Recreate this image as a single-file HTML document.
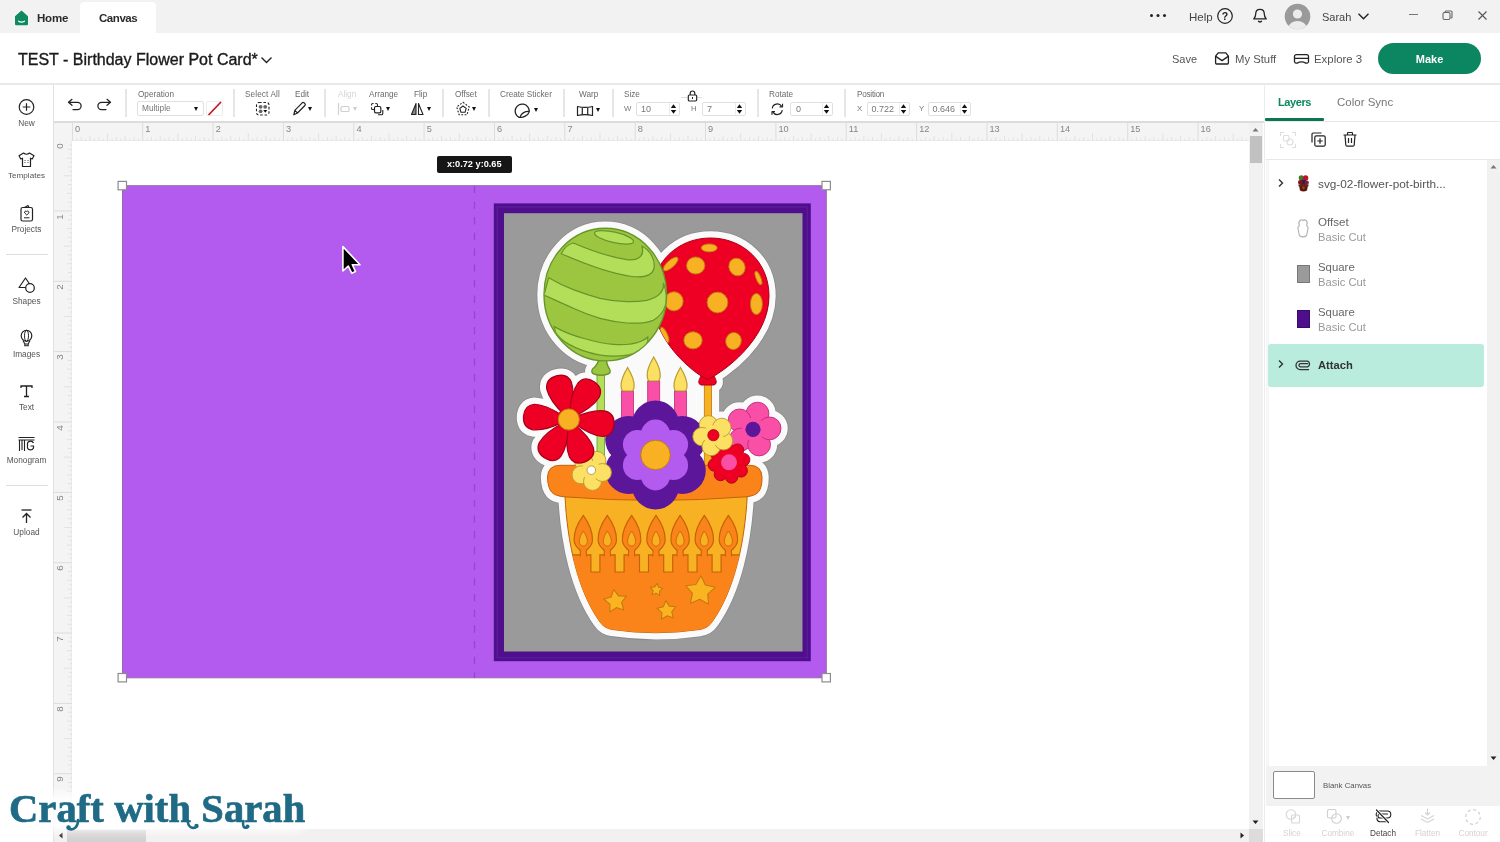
<!DOCTYPE html>
<html>
<head>
<meta charset="utf-8">
<title>Design Space</title>
<style>
*{box-sizing:border-box;margin:0;padding:0}
html,body{width:1500px;height:842px;overflow:hidden;background:#fff}
body{font-family:"Liberation Sans",sans-serif;color:#333;position:relative}
.abs{position:absolute}
.t{position:absolute;white-space:nowrap;line-height:1}
/* top tab bar */
#tabbar{left:0;top:0;width:1500px;height:33px;background:#f2f2f2}
#canvastab{left:80px;top:2px;width:76px;height:31px;background:#fff;border-radius:4px 4px 0 0}
/* header */
#header{left:0;top:33px;width:1500px;height:52px;background:#fff;border-bottom:2px solid #e9e9e9}
/* toolbar */
#toolbar{left:54px;top:84.6px;width:1210px;height:38.4px;background:#fff;border-bottom:2px solid #dcdcdc}
.sep{position:absolute;top:89px;width:2px;height:28px;background:#e6e6e6}
.lbl{position:absolute;white-space:nowrap;line-height:1;font-size:8.5px;color:#6a6a6a;top:91px}
.inp{position:absolute;top:102px;height:14px;border:1px solid #e0e0e0;border-radius:2px;background:#fff;font-size:9px;color:#777;line-height:12px;padding-left:5px}
.spin{position:absolute;top:103px;width:6px;height:12px}
.dd{position:absolute;width:0;height:0;border-left:2.5px solid transparent;border-right:2.5px solid transparent;border-top:4px solid #111}
/* left sidebar */
#sidebar{left:0;top:84.6px;width:54px;height:757.4px;background:#fff;border-right:1px solid #e0e0e0}
.sl{position:absolute;left:0;width:53px;text-align:center;font-size:8.5px;color:#555;line-height:1}
.sline{position:absolute;left:6px;width:42px;height:1px;background:#ddd}
/* rulers */
#rulerh{left:54px;top:123px;width:1195px;height:18px;background:#f4f4f4;border-bottom:1px solid #ebebeb}
#rulerv{left:54px;top:141px;width:18px;height:688px;background:#f4f4f4;border-right:1px solid #ebebeb}
.rn{position:absolute;font-size:9.2px;color:#858585;line-height:1}
/* right panel */
#rpanel{left:1263.5px;top:84.6px;width:236.5px;height:757.4px;background:#fff;border-left:1.2px solid #ececec}
</style>
</head>
<body>
<div id="root" style="position:absolute;left:0;top:0;width:1500px;height:842px;will-change:transform;overflow:hidden">
<div class="abs" id="tabbar"></div>
<div class="abs" id="canvastab"></div>
<div class="abs" id="header"></div>
<div class="abs" id="toolbar"></div>
<div class="abs" id="sidebar"></div>
<div class="abs" id="rulerh"></div>
<div class="abs" id="rulerv"></div>
<div class="abs" id="rpanel"></div>

<svg class="abs" style="left:13px;top:9px" width="17" height="18" viewBox="0 0 17 18"><path d="M8.5 1.5 L15 7.2 V15 a1.3 1.3 0 0 1 -1.3 1.3 H3.3 A1.3 1.3 0 0 1 2 15 V7.2 Z" fill="#0d8a5f"/><path d="M5.6 12.2 q2.9 1.7 5.8 0" stroke="#fff" stroke-width="1.3" fill="none" stroke-linecap="round"/></svg>
<div class="t" style="left:37px;top:13px;font-size:11.5px;font-weight:bold;color:#2b2b2b;letter-spacing:-0.2px">Home</div>
<div class="t" style="left:99px;top:13px;font-size:11.5px;font-weight:bold;color:#2b2b2b;letter-spacing:-0.45px">Canvas</div>
<div class="abs" style="left:1150px;top:14px;width:3px;height:3px;border-radius:50%;background:#222;box-shadow:6.5px 0 0 #222,13px 0 0 #222"></div>
<div class="t" style="left:1189px;top:12px;font-size:11.5px;color:#444">Help</div>
<svg class="abs" style="left:1216px;top:7px" width="18" height="18" viewBox="0 0 18 18"><circle cx="9" cy="9" r="7.3" fill="none" stroke="#222" stroke-width="1.2"/><text x="9" y="13" text-anchor="middle" font-family="Liberation Sans" font-size="10.5" font-weight="bold" fill="#222">?</text></svg>
<svg class="abs" style="left:1251px;top:7px" width="18" height="18" viewBox="0 0 18 18"><path d="M9 2.3 c-2.8 0 -4.3 2 -4.3 4.6 c0 2.6 -0.9 3.8 -1.9 5 h12.4 c-1 -1.2 -1.9 -2.4 -1.9 -5 c0 -2.6 -1.5 -4.6 -4.3 -4.6 z" fill="none" stroke="#222" stroke-width="1.3" stroke-linejoin="round"/><path d="M7.3 13.8 a1.8 1.8 0 0 0 3.4 0" fill="none" stroke="#222" stroke-width="1.3"/></svg>
<svg class="abs" style="left:1284px;top:3px" width="27" height="27" viewBox="0 0 27 27"><defs><clipPath id="av"><circle cx="13.5" cy="13.5" r="12.8"/></clipPath></defs><circle cx="13.5" cy="13.5" r="12.8" fill="#9a9a9a"/><g clip-path="url(#av)"><circle cx="13.5" cy="11" r="4.6" fill="#ececec"/><ellipse cx="13.5" cy="24.5" rx="9" ry="6.5" fill="#ececec"/></g></svg>
<div class="t" style="left:1322px;top:12px;font-size:11px;color:#444">Sarah</div>
<svg class="abs" style="left:1357px;top:12px" width="13" height="9" viewBox="0 0 13 9"><path d="M1.5 1.8 L6.5 6.8 L11.5 1.8" fill="none" stroke="#222" stroke-width="1.4"/></svg>
<div class="abs" style="left:1409px;top:14px;width:9px;height:1px;background:#777"></div>
<svg class="abs" style="left:1442px;top:10px" width="11" height="11" viewBox="0 0 11 11"><rect x="1" y="2.5" width="7" height="7" rx="1.5" fill="none" stroke="#666" stroke-width="1.1"/><path d="M3 2.5 V2 a1 1 0 0 1 1 -1 H9 a1 1 0 0 1 1 1 V7 a1 1 0 0 1 -1 1 H8.5" fill="none" stroke="#666" stroke-width="1.1"/></svg>
<svg class="abs" style="left:1477px;top:10px" width="11" height="11" viewBox="0 0 11 11"><path d="M1.5 1.5 L9.5 9.5 M9.5 1.5 L1.5 9.5" stroke="#555" stroke-width="1.1"/></svg>


<div class="t" style="left:18px;top:51.5px;font-size:16px;color:#1a1a1a;-webkit-text-stroke:0.35px #1a1a1a">TEST - Birthday Flower Pot Card*</div>
<svg class="abs" style="left:260px;top:56px" width="13" height="9" viewBox="0 0 13 9"><path d="M1.5 1.5 L6.5 6.5 L11.5 1.5" fill="none" stroke="#222" stroke-width="1.4"/></svg>
<div class="t" style="left:1172px;top:54px;font-size:11px;color:#555">Save</div>
<svg class="abs" style="left:1214px;top:50.5px" width="16" height="15" viewBox="0 0 16 15"><path d="M1.6 5.2 L4.2 1.8 H11.8 L14.4 5.2 V12 a1 1 0 0 1 -1 1 H2.6 a1 1 0 0 1 -1 -1 Z" fill="none" stroke="#222" stroke-width="1.3" stroke-linejoin="round"/><path d="M1.8 5.4 L8 9.6 L14.2 5.4" fill="none" stroke="#222" stroke-width="1.3" stroke-linejoin="round"/></svg>
<div class="t" style="left:1235px;top:54px;font-size:11.3px;color:#555">My Stuff</div>
<svg class="abs" style="left:1293px;top:52.5px" width="17" height="12" viewBox="0 0 17 12"><path d="M3.4 1.6 H13.6 a1.9 1.9 0 0 1 1.9 1.9 V8.6 a1.5 1.5 0 0 1 -1.5 1.5 H12.8 Q8.5 7.8 4.2 10.1 H3 a1.5 1.5 0 0 1 -1.5 -1.5 V3.5 a1.9 1.9 0 0 1 1.9 -1.9 Z M1.6 5.3 H15.4" fill="none" stroke="#222" stroke-width="1.3" stroke-linejoin="round"/></svg>
<div class="t" style="left:1314px;top:54px;font-size:11.4px;color:#555">Explore 3</div>
<div class="abs" style="left:1378px;top:43px;width:103px;height:31px;border-radius:16px;background:#0b8660"></div>
<div class="t" style="left:1378px;width:103px;text-align:center;top:54px;font-size:11px;font-weight:bold;color:#fff">Make</div>

<div class="sep" style="left:125px"></div>
<div class="sep" style="left:233px"></div>
<div class="sep" style="left:324px"></div>
<div class="sep" style="left:442px"></div>
<div class="sep" style="left:488px"></div>
<div class="sep" style="left:563px"></div>
<div class="sep" style="left:612px"></div>
<div class="sep" style="left:757px"></div>
<div class="sep" style="left:844px"></div>
<svg class="abs" style="left:66px;top:97px" width="18" height="16" viewBox="0 0 18 16"><path d="M6 2.3 L2.5 5.3 L6 8.3 M2.8 5.3 H11.5 a3.6 3.6 0 0 1 0 7.2 H7" fill="none" stroke="#222" stroke-width="1.25" stroke-linecap="round" stroke-linejoin="round"/></svg>
<svg class="abs" style="left:95px;top:97px" width="18" height="16" viewBox="0 0 18 16"><path d="M12 2.3 L15.5 5.3 L12 8.3 M15.2 5.3 H6.5 a3.6 3.6 0 0 0 0 7.2 H11" fill="none" stroke="#222" stroke-width="1.25" stroke-linecap="round" stroke-linejoin="round"/></svg>
<div class="lbl" style="left:138px;font-size:8.2px">Operation</div>
<div class="inp" style="left:137px;width:67px;top:101px;height:15px;line-height:13px;font-size:8.3px;padding-left:4px">Multiple</div>
<div class="dd" style="left:194px;top:107px;border-top-color:#111"></div><div class="abs" style="left:206px;top:101px;width:17px;height:15px;border:1px solid #ececec;border-radius:2px"></div>
<svg class="abs" style="left:207px;top:101px" width="16" height="15" viewBox="0 0 16 15"><path d="M2 13.5 L13.5 1.5" stroke="#c4161c" stroke-width="1.7" stroke-linecap="round"/></svg>
<div class="lbl" style="left:245px;font-size:8.2px;letter-spacing:0.12px">Select All</div>
<svg class="abs" style="left:255px;top:101px" width="16" height="16" viewBox="0 0 16 16"><rect x="1.5" y="1.5" width="12.5" height="12.5" rx="2.5" fill="none" stroke="#222" stroke-width="1.1" stroke-dasharray="2.6 1.8"/><circle cx="5.6" cy="5.8" r="1.9" fill="#666"/><circle cx="10.2" cy="5.8" r="1.9" fill="#666"/><circle cx="5.6" cy="10.3" r="1.9" fill="#666"/><path d="M8.3 9 H12.3 L10.3 11.8 Z" fill="#111"/></svg>
<div class="lbl" style="left:295px;font-size:8.2px">Edit</div>
<svg class="abs" style="left:292px;top:101px" width="15" height="16" viewBox="0 0 15 16"><path d="M10.2 1.8 a1.3 1.3 0 0 1 1.8 0 l0.9 0.9 a1.3 1.3 0 0 1 0 1.8 L5.5 12 L1.8 13.8 L2.8 9.3 Z M2.8 9.3 L5.5 12" fill="none" stroke="#222" stroke-width="1.2" stroke-linejoin="round"/></svg>
<div class="dd" style="left:308px;top:107px;border-top-color:#111"></div><div class="lbl" style="left:338px;font-size:8.2px;color:#d4d4d4">Align</div>
<svg class="abs" style="left:337px;top:102px" width="14" height="14" viewBox="0 0 14 14"><path d="M1.5 1 V13" stroke="#d0d0d0" stroke-width="1.2"/><rect x="4" y="4.5" width="8" height="5" rx="1" fill="none" stroke="#d0d0d0" stroke-width="1.2"/></svg>
<div class="dd" style="left:353px;top:107px;border-top-color:#ccc"></div><div class="lbl" style="left:369px;font-size:8.2px">Arrange</div>
<svg class="abs" style="left:370px;top:102px" width="15" height="15" viewBox="0 0 15 15"><path d="M4.2 7.5 H2.8 a1.3 1.3 0 0 1 -1.3 -1.3 V5.3 M1.5 3.6 V2.8 a1.3 1.3 0 0 1 1.3 -1.3 H3.6 M5.3 1.5 H6.2 a1.3 1.3 0 0 1 1.3 1.3 V4" fill="none" stroke="#222" stroke-width="1.1"/><rect x="4.5" y="4.5" width="6.3" height="6.3" rx="1.3" fill="#fff" stroke="#222" stroke-width="1.2"/><path d="M12.8 8 V11.5 a1.3 1.3 0 0 1 -1.3 1.3 H8" fill="none" stroke="#222" stroke-width="1.1"/></svg>
<div class="dd" style="left:386px;top:107px;border-top-color:#111"></div><div class="lbl" style="left:414px;font-size:8.2px">Flip</div>
<svg class="abs" style="left:410px;top:102px" width="15" height="15" viewBox="0 0 15 15"><path d="M6 1.5 V12.5 H1.5 Z" fill="#888" stroke="#222" stroke-width="1.1" stroke-linejoin="round"/><path d="M8.5 1.5 V12.5 H13 Z" fill="#fff" stroke="#222" stroke-width="1.1" stroke-linejoin="round"/></svg>
<div class="dd" style="left:427px;top:107px;border-top-color:#111"></div><div class="lbl" style="left:455px;font-size:8.2px">Offset</div>
<svg class="abs" style="left:455px;top:101px" width="16" height="17" viewBox="0 0 16 17"><path d="M8 1.3 L14.3 6 L11.9 13.8 H4.1 L1.7 6 Z" fill="none" stroke="#222" stroke-width="1.1" stroke-dasharray="1.8 1.5" stroke-linejoin="round"/><path d="M8 5 L11.2 7.4 L10 11.3 H6 L4.8 7.4 Z" fill="none" stroke="#222" stroke-width="1.1" stroke-linejoin="round"/></svg>
<div class="dd" style="left:472px;top:107px;border-top-color:#111"></div><div class="lbl" style="left:500px;font-size:8.2px">Create Sticker</div>
<svg class="abs" style="left:514px;top:102px" width="18" height="18" viewBox="0 0 18 18"><path d="M5 15.3 A7 7 0 1 1 15.2 9.5 C11.5 9.2 7 11 6 15.3 Z" fill="none" stroke="#222" stroke-width="1.3" stroke-linejoin="round"/><path d="M6 15.3 C8.5 15.8 14.5 13.5 15.2 9.5" fill="none" stroke="#222" stroke-width="1.3"/></svg>
<div class="dd" style="left:534px;top:108px;border-top-color:#111"></div><div class="lbl" style="left:579px;font-size:8.2px">Warp</div>
<svg class="abs" style="left:576px;top:105px" width="18" height="12" viewBox="0 0 18 12"><path d="M1.5 1.5 Q9 3.3 16.5 1.5 V10.5 Q9 8.7 1.5 10.5 Z M6.3 2.3 V9.7 M11.7 2.3 V9.7" fill="none" stroke="#222" stroke-width="1.2" stroke-linejoin="round"/></svg>
<div class="dd" style="left:596px;top:108px;border-top-color:#111"></div><div class="lbl" style="left:624px;font-size:8.2px">Size</div>
<div class="lbl" style="left:624px;top:105px;font-size:7.8px;color:#777">W</div>
<div class="inp" style="left:636px;width:44px;padding-left:4px">10</div>
<div class="abs" style="left:669px;top:103px;width:1px;height:12px;background:#ececec"></div>
<svg class="abs" style="left:670px;top:103px" width="7" height="12" viewBox="0 0 7 12"><path d="M0.8 5 L3.5 1.3 L6.2 5 Z M0.8 7 L3.5 10.7 L6.2 7 Z" fill="#111"/></svg><div class="abs" style="left:681px;top:97px;width:6px;height:1px;background:#ddd"></div><div class="abs" style="left:698px;top:97px;width:4px;height:1px;background:#ddd"></div>
<svg class="abs" style="left:687px;top:90px" width="11" height="12" viewBox="0 0 11 12"><path d="M3.2 5 V3.3 a2.3 2.3 0 0 1 4.6 0 V5" fill="none" stroke="#222" stroke-width="1.2"/><rect x="1.3" y="5" width="8.4" height="6" rx="1.2" fill="#fff" stroke="#222" stroke-width="1.2"/><rect x="5" y="7" width="1" height="2" fill="#222"/></svg>
<div class="lbl" style="left:691px;top:105px;font-size:7.8px;color:#777">H</div>
<div class="inp" style="left:702px;width:44px;padding-left:4px">7</div>
<div class="abs" style="left:735px;top:103px;width:1px;height:12px;background:#ececec"></div>
<svg class="abs" style="left:736px;top:103px" width="7" height="12" viewBox="0 0 7 12"><path d="M0.8 5 L3.5 1.3 L6.2 5 Z M0.8 7 L3.5 10.7 L6.2 7 Z" fill="#111"/></svg><div class="lbl" style="left:769px;font-size:8.2px">Rotate</div>
<svg class="abs" style="left:770px;top:102px" width="14.5" height="14.5" viewBox="0 0 16 16"><path d="M2.5 7 A5.6 5.6 0 0 1 12.8 4.8 M13.5 9 A5.6 5.6 0 0 1 3.2 11.2" fill="none" stroke="#222" stroke-width="1.3"/><path d="M13.8 2 V5.3 H10.5 M2.2 14 V10.7 H5.5" fill="none" stroke="#222" stroke-width="1.3" stroke-linejoin="round"/></svg>
<div class="inp" style="left:790px;width:43px">0</div>
<div class="abs" style="left:822px;top:103px;width:1px;height:12px;background:#ececec"></div>
<svg class="abs" style="left:823px;top:103px" width="7" height="12" viewBox="0 0 7 12"><path d="M0.8 5 L3.5 1.3 L6.2 5 Z M0.8 7 L3.5 10.7 L6.2 7 Z" fill="#111"/></svg><div class="lbl" style="left:857px;font-size:8.2px;letter-spacing:-0.25px">Position</div>
<div class="lbl" style="left:857px;top:105px;font-size:7.8px;color:#777">X</div>
<div class="inp" style="left:867px;width:43px;padding-left:3.5px;font-size:9px">0.722</div>
<div class="abs" style="left:899px;top:103px;width:1px;height:12px;background:#ececec"></div>
<svg class="abs" style="left:900px;top:103px" width="7" height="12" viewBox="0 0 7 12"><path d="M0.8 5 L3.5 1.3 L6.2 5 Z M0.8 7 L3.5 10.7 L6.2 7 Z" fill="#111"/></svg><div class="lbl" style="left:919px;top:105px;font-size:7.8px;color:#777">Y</div>
<div class="inp" style="left:928px;width:43px;padding-left:3.5px;font-size:9px">0.646</div>
<div class="abs" style="left:960px;top:103px;width:1px;height:12px;background:#ececec"></div>
<svg class="abs" style="left:961px;top:103px" width="7" height="12" viewBox="0 0 7 12"><path d="M0.8 5 L3.5 1.3 L6.2 5 Z M0.8 7 L3.5 10.7 L6.2 7 Z" fill="#111"/></svg>

<svg class="abs" style="left:17px;top:97px" width="19" height="19" viewBox="0 0 19 19"><circle cx="9.5" cy="10" r="7.3" fill="none" stroke="#222" stroke-width="1.2"/><path d="M9.5 6.2 V13.8 M5.7 10 H13.3" stroke="#222" stroke-width="1.2"/></svg>
<div class="sl" style="top:119px;font-size:8.3px">New</div>
<svg class="abs" style="left:17px;top:151px" width="19" height="18" viewBox="0 0 19 18"><path d="M6.5 2 L2 4.8 L3.8 8 L5.5 7.2 V15.5 H13.5 V7.2 L15.2 8 L17 4.8 L12.5 2 Q9.5 4.5 6.5 2 Z" fill="none" stroke="#222" stroke-width="1.2" stroke-linejoin="round"/><path d="M8 9 v4 M11 9 v4" stroke="#222" stroke-width="0.8" stroke-dasharray="1 1"/></svg>
<div class="sl" style="top:172px;font-size:8.1px">Templates</div>
<svg class="abs" style="left:19px;top:204px" width="16" height="19" viewBox="0 0 16 19"><rect x="2" y="3.5" width="11.5" height="13.5" rx="1.8" fill="none" stroke="#222" stroke-width="1.2"/><path d="M5.5 3.5 L9 1.5 L10 3.5" fill="none" stroke="#222" stroke-width="1.1"/><path d="M7.750000 11 L5.6 8.9 a1.3 1.3 0 0 1 2.150000 -1.4 a1.3 1.3 0 0 1 2.150000 1.4 Z" fill="none" stroke="#222" stroke-width="1"/><path d="M5 13.8 H10.5" stroke="#222" stroke-width="1"/></svg>
<div class="sl" style="top:225px;font-size:8.3px">Projects</div>
<div class="sline" style="top:254px"></div>
<svg class="abs" style="left:17px;top:276px" width="20" height="19" viewBox="0 0 20 19"><path d="M8.5 2 L15 11.5 H2 Z" fill="none" stroke="#222" stroke-width="1.2" stroke-linejoin="round"/><circle cx="13" cy="12" r="4.3" fill="#fff" stroke="#222" stroke-width="1.2"/></svg>
<div class="sl" style="top:297px;font-size:8.3px">Shapes</div>
<svg class="abs" style="left:19px;top:329px" width="15" height="19" viewBox="0 0 15 19"><ellipse cx="7.5" cy="6.8" rx="5.3" ry="5.5" fill="none" stroke="#222" stroke-width="1.2"/><ellipse cx="7.5" cy="6.8" rx="2" ry="5.5" fill="none" stroke="#222" stroke-width="1"/><path d="M4 11.5 L5.8 15 H9.2 L11 11.5 M5.8 15 V16.8 H9.2 V15" fill="none" stroke="#222" stroke-width="1.1"/></svg>
<div class="sl" style="top:350px;font-size:8.3px">Images</div>
<svg class="abs" style="left:19px;top:384px" width="15" height="15" viewBox="0 0 15 15"><path d="M2 4 V2 H13 V4 M7.5 2 V12.5 M5 12.5 H10" fill="none" stroke="#222" stroke-width="1.3"/></svg>
<div class="sl" style="top:403px;font-size:8.3px">Text</div>
<svg class="abs" style="left:17px;top:436px" width="19" height="17" viewBox="0 0 19 17"><path d="M1.5 1.5 H17.5 M1.5 4 H17.5" stroke="#222" stroke-width="1.1"/><path d="M2.5 15 V4 M5 14 V4 M7.5 15 V4" stroke="#222" stroke-width="1.1"/><path d="M16.5 7 a3.3 3.3 0 0 0 -6 0 V12 a3.3 3.3 0 0 0 6 0 V10 H13.5" fill="none" stroke="#222" stroke-width="1.2"/></svg>
<div class="sl" style="top:456px;font-size:8.3px">Monogram</div>
<div class="sline" style="top:485px"></div>
<svg class="abs" style="left:18px;top:508px" width="17" height="17" viewBox="0 0 17 17"><path d="M3.5 2 H13.5" stroke="#222" stroke-width="1.3"/><path d="M8.5 15 V5.5 M4.5 9.5 L8.5 5.5 L12.5 9.5" fill="none" stroke="#222" stroke-width="1.3"/></svg>
<div class="sl" style="top:528px;font-size:8.3px">Upload</div>

<svg class="abs" style="left:54px;top:123px" width="1195" height="19" viewBox="0 0 1195 19"><rect x="17.9" y="0" width="1" height="18" fill="#dcdcdc"/><rect x="22.3" y="15.5" width="1" height="2.5" fill="#e2e2e2"/><rect x="26.7" y="14" width="1" height="4" fill="#e2e2e2"/><rect x="31.1" y="15.5" width="1" height="2.5" fill="#e2e2e2"/><rect x="35.5" y="13" width="1" height="5" fill="#e2e2e2"/><rect x="39.9" y="15.5" width="1" height="2.5" fill="#e2e2e2"/><rect x="44.3" y="14" width="1" height="4" fill="#e2e2e2"/><rect x="48.7" y="15.5" width="1" height="2.5" fill="#e2e2e2"/><rect x="53.1" y="10" width="1" height="8" fill="#e2e2e2"/><rect x="57.5" y="15.5" width="1" height="2.5" fill="#e2e2e2"/><rect x="61.9" y="14" width="1" height="4" fill="#e2e2e2"/><rect x="66.3" y="15.5" width="1" height="2.5" fill="#e2e2e2"/><rect x="70.7" y="13" width="1" height="5" fill="#e2e2e2"/><rect x="75.1" y="15.5" width="1" height="2.5" fill="#e2e2e2"/><rect x="79.5" y="14" width="1" height="4" fill="#e2e2e2"/><rect x="83.9" y="15.5" width="1" height="2.5" fill="#e2e2e2"/><rect x="88.2" y="0" width="1" height="18" fill="#dcdcdc"/><rect x="92.6" y="15.5" width="1" height="2.5" fill="#e2e2e2"/><rect x="97.0" y="14" width="1" height="4" fill="#e2e2e2"/><rect x="101.4" y="15.5" width="1" height="2.5" fill="#e2e2e2"/><rect x="105.8" y="13" width="1" height="5" fill="#e2e2e2"/><rect x="110.2" y="15.5" width="1" height="2.5" fill="#e2e2e2"/><rect x="114.6" y="14" width="1" height="4" fill="#e2e2e2"/><rect x="119.0" y="15.5" width="1" height="2.5" fill="#e2e2e2"/><rect x="123.4" y="10" width="1" height="8" fill="#e2e2e2"/><rect x="127.8" y="15.5" width="1" height="2.5" fill="#e2e2e2"/><rect x="132.2" y="14" width="1" height="4" fill="#e2e2e2"/><rect x="136.6" y="15.5" width="1" height="2.5" fill="#e2e2e2"/><rect x="141.0" y="13" width="1" height="5" fill="#e2e2e2"/><rect x="145.4" y="15.5" width="1" height="2.5" fill="#e2e2e2"/><rect x="149.8" y="14" width="1" height="4" fill="#e2e2e2"/><rect x="154.2" y="15.5" width="1" height="2.5" fill="#e2e2e2"/><rect x="158.6" y="0" width="1" height="18" fill="#dcdcdc"/><rect x="163.0" y="15.5" width="1" height="2.5" fill="#e2e2e2"/><rect x="167.4" y="14" width="1" height="4" fill="#e2e2e2"/><rect x="171.8" y="15.5" width="1" height="2.5" fill="#e2e2e2"/><rect x="176.2" y="13" width="1" height="5" fill="#e2e2e2"/><rect x="180.6" y="15.5" width="1" height="2.5" fill="#e2e2e2"/><rect x="185.0" y="14" width="1" height="4" fill="#e2e2e2"/><rect x="189.4" y="15.5" width="1" height="2.5" fill="#e2e2e2"/><rect x="193.8" y="10" width="1" height="8" fill="#e2e2e2"/><rect x="198.2" y="15.5" width="1" height="2.5" fill="#e2e2e2"/><rect x="202.6" y="14" width="1" height="4" fill="#e2e2e2"/><rect x="207.0" y="15.5" width="1" height="2.5" fill="#e2e2e2"/><rect x="211.4" y="13" width="1" height="5" fill="#e2e2e2"/><rect x="215.8" y="15.5" width="1" height="2.5" fill="#e2e2e2"/><rect x="220.2" y="14" width="1" height="4" fill="#e2e2e2"/><rect x="224.6" y="15.5" width="1" height="2.5" fill="#e2e2e2"/><rect x="228.9" y="0" width="1" height="18" fill="#dcdcdc"/><rect x="233.3" y="15.5" width="1" height="2.5" fill="#e2e2e2"/><rect x="237.7" y="14" width="1" height="4" fill="#e2e2e2"/><rect x="242.1" y="15.5" width="1" height="2.5" fill="#e2e2e2"/><rect x="246.5" y="13" width="1" height="5" fill="#e2e2e2"/><rect x="250.9" y="15.5" width="1" height="2.5" fill="#e2e2e2"/><rect x="255.3" y="14" width="1" height="4" fill="#e2e2e2"/><rect x="259.7" y="15.5" width="1" height="2.5" fill="#e2e2e2"/><rect x="264.1" y="10" width="1" height="8" fill="#e2e2e2"/><rect x="268.5" y="15.5" width="1" height="2.5" fill="#e2e2e2"/><rect x="272.9" y="14" width="1" height="4" fill="#e2e2e2"/><rect x="277.3" y="15.5" width="1" height="2.5" fill="#e2e2e2"/><rect x="281.7" y="13" width="1" height="5" fill="#e2e2e2"/><rect x="286.1" y="15.5" width="1" height="2.5" fill="#e2e2e2"/><rect x="290.5" y="14" width="1" height="4" fill="#e2e2e2"/><rect x="294.9" y="15.5" width="1" height="2.5" fill="#e2e2e2"/><rect x="299.3" y="0" width="1" height="18" fill="#dcdcdc"/><rect x="303.7" y="15.5" width="1" height="2.5" fill="#e2e2e2"/><rect x="308.1" y="14" width="1" height="4" fill="#e2e2e2"/><rect x="312.5" y="15.5" width="1" height="2.5" fill="#e2e2e2"/><rect x="316.9" y="13" width="1" height="5" fill="#e2e2e2"/><rect x="321.3" y="15.5" width="1" height="2.5" fill="#e2e2e2"/><rect x="325.7" y="14" width="1" height="4" fill="#e2e2e2"/><rect x="330.1" y="15.5" width="1" height="2.5" fill="#e2e2e2"/><rect x="334.5" y="10" width="1" height="8" fill="#e2e2e2"/><rect x="338.9" y="15.5" width="1" height="2.5" fill="#e2e2e2"/><rect x="343.3" y="14" width="1" height="4" fill="#e2e2e2"/><rect x="347.7" y="15.5" width="1" height="2.5" fill="#e2e2e2"/><rect x="352.1" y="13" width="1" height="5" fill="#e2e2e2"/><rect x="356.5" y="15.5" width="1" height="2.5" fill="#e2e2e2"/><rect x="360.9" y="14" width="1" height="4" fill="#e2e2e2"/><rect x="365.3" y="15.5" width="1" height="2.5" fill="#e2e2e2"/><rect x="369.6" y="0" width="1" height="18" fill="#dcdcdc"/><rect x="374.0" y="15.5" width="1" height="2.5" fill="#e2e2e2"/><rect x="378.4" y="14" width="1" height="4" fill="#e2e2e2"/><rect x="382.8" y="15.5" width="1" height="2.5" fill="#e2e2e2"/><rect x="387.2" y="13" width="1" height="5" fill="#e2e2e2"/><rect x="391.6" y="15.5" width="1" height="2.5" fill="#e2e2e2"/><rect x="396.0" y="14" width="1" height="4" fill="#e2e2e2"/><rect x="400.4" y="15.5" width="1" height="2.5" fill="#e2e2e2"/><rect x="404.8" y="10" width="1" height="8" fill="#e2e2e2"/><rect x="409.2" y="15.5" width="1" height="2.5" fill="#e2e2e2"/><rect x="413.6" y="14" width="1" height="4" fill="#e2e2e2"/><rect x="418.0" y="15.5" width="1" height="2.5" fill="#e2e2e2"/><rect x="422.4" y="13" width="1" height="5" fill="#e2e2e2"/><rect x="426.8" y="15.5" width="1" height="2.5" fill="#e2e2e2"/><rect x="431.2" y="14" width="1" height="4" fill="#e2e2e2"/><rect x="435.6" y="15.5" width="1" height="2.5" fill="#e2e2e2"/><rect x="440.0" y="0" width="1" height="18" fill="#dcdcdc"/><rect x="444.4" y="15.5" width="1" height="2.5" fill="#e2e2e2"/><rect x="448.8" y="14" width="1" height="4" fill="#e2e2e2"/><rect x="453.2" y="15.5" width="1" height="2.5" fill="#e2e2e2"/><rect x="457.6" y="13" width="1" height="5" fill="#e2e2e2"/><rect x="462.0" y="15.5" width="1" height="2.5" fill="#e2e2e2"/><rect x="466.4" y="14" width="1" height="4" fill="#e2e2e2"/><rect x="470.8" y="15.5" width="1" height="2.5" fill="#e2e2e2"/><rect x="475.2" y="10" width="1" height="8" fill="#e2e2e2"/><rect x="479.6" y="15.5" width="1" height="2.5" fill="#e2e2e2"/><rect x="484.0" y="14" width="1" height="4" fill="#e2e2e2"/><rect x="488.4" y="15.5" width="1" height="2.5" fill="#e2e2e2"/><rect x="492.8" y="13" width="1" height="5" fill="#e2e2e2"/><rect x="497.2" y="15.5" width="1" height="2.5" fill="#e2e2e2"/><rect x="501.6" y="14" width="1" height="4" fill="#e2e2e2"/><rect x="506.0" y="15.5" width="1" height="2.5" fill="#e2e2e2"/><rect x="510.3" y="0" width="1" height="18" fill="#dcdcdc"/><rect x="514.7" y="15.5" width="1" height="2.5" fill="#e2e2e2"/><rect x="519.1" y="14" width="1" height="4" fill="#e2e2e2"/><rect x="523.5" y="15.5" width="1" height="2.5" fill="#e2e2e2"/><rect x="527.9" y="13" width="1" height="5" fill="#e2e2e2"/><rect x="532.3" y="15.5" width="1" height="2.5" fill="#e2e2e2"/><rect x="536.7" y="14" width="1" height="4" fill="#e2e2e2"/><rect x="541.1" y="15.5" width="1" height="2.5" fill="#e2e2e2"/><rect x="545.5" y="10" width="1" height="8" fill="#e2e2e2"/><rect x="549.9" y="15.5" width="1" height="2.5" fill="#e2e2e2"/><rect x="554.3" y="14" width="1" height="4" fill="#e2e2e2"/><rect x="558.7" y="15.5" width="1" height="2.5" fill="#e2e2e2"/><rect x="563.1" y="13" width="1" height="5" fill="#e2e2e2"/><rect x="567.5" y="15.5" width="1" height="2.5" fill="#e2e2e2"/><rect x="571.9" y="14" width="1" height="4" fill="#e2e2e2"/><rect x="576.3" y="15.5" width="1" height="2.5" fill="#e2e2e2"/><rect x="580.7" y="0" width="1" height="18" fill="#dcdcdc"/><rect x="585.1" y="15.5" width="1" height="2.5" fill="#e2e2e2"/><rect x="589.5" y="14" width="1" height="4" fill="#e2e2e2"/><rect x="593.9" y="15.5" width="1" height="2.5" fill="#e2e2e2"/><rect x="598.3" y="13" width="1" height="5" fill="#e2e2e2"/><rect x="602.7" y="15.5" width="1" height="2.5" fill="#e2e2e2"/><rect x="607.1" y="14" width="1" height="4" fill="#e2e2e2"/><rect x="611.5" y="15.5" width="1" height="2.5" fill="#e2e2e2"/><rect x="615.9" y="10" width="1" height="8" fill="#e2e2e2"/><rect x="620.3" y="15.5" width="1" height="2.5" fill="#e2e2e2"/><rect x="624.7" y="14" width="1" height="4" fill="#e2e2e2"/><rect x="629.1" y="15.5" width="1" height="2.5" fill="#e2e2e2"/><rect x="633.5" y="13" width="1" height="5" fill="#e2e2e2"/><rect x="637.9" y="15.5" width="1" height="2.5" fill="#e2e2e2"/><rect x="642.3" y="14" width="1" height="4" fill="#e2e2e2"/><rect x="646.7" y="15.5" width="1" height="2.5" fill="#e2e2e2"/><rect x="651.0" y="0" width="1" height="18" fill="#dcdcdc"/><rect x="655.4" y="15.5" width="1" height="2.5" fill="#e2e2e2"/><rect x="659.8" y="14" width="1" height="4" fill="#e2e2e2"/><rect x="664.2" y="15.5" width="1" height="2.5" fill="#e2e2e2"/><rect x="668.6" y="13" width="1" height="5" fill="#e2e2e2"/><rect x="673.0" y="15.5" width="1" height="2.5" fill="#e2e2e2"/><rect x="677.4" y="14" width="1" height="4" fill="#e2e2e2"/><rect x="681.8" y="15.5" width="1" height="2.5" fill="#e2e2e2"/><rect x="686.2" y="10" width="1" height="8" fill="#e2e2e2"/><rect x="690.6" y="15.5" width="1" height="2.5" fill="#e2e2e2"/><rect x="695.0" y="14" width="1" height="4" fill="#e2e2e2"/><rect x="699.4" y="15.5" width="1" height="2.5" fill="#e2e2e2"/><rect x="703.8" y="13" width="1" height="5" fill="#e2e2e2"/><rect x="708.2" y="15.5" width="1" height="2.5" fill="#e2e2e2"/><rect x="712.6" y="14" width="1" height="4" fill="#e2e2e2"/><rect x="717.0" y="15.5" width="1" height="2.5" fill="#e2e2e2"/><rect x="721.4" y="0" width="1" height="18" fill="#dcdcdc"/><rect x="725.8" y="15.5" width="1" height="2.5" fill="#e2e2e2"/><rect x="730.2" y="14" width="1" height="4" fill="#e2e2e2"/><rect x="734.6" y="15.5" width="1" height="2.5" fill="#e2e2e2"/><rect x="739.0" y="13" width="1" height="5" fill="#e2e2e2"/><rect x="743.4" y="15.5" width="1" height="2.5" fill="#e2e2e2"/><rect x="747.8" y="14" width="1" height="4" fill="#e2e2e2"/><rect x="752.2" y="15.5" width="1" height="2.5" fill="#e2e2e2"/><rect x="756.6" y="10" width="1" height="8" fill="#e2e2e2"/><rect x="761.0" y="15.5" width="1" height="2.5" fill="#e2e2e2"/><rect x="765.4" y="14" width="1" height="4" fill="#e2e2e2"/><rect x="769.8" y="15.5" width="1" height="2.5" fill="#e2e2e2"/><rect x="774.2" y="13" width="1" height="5" fill="#e2e2e2"/><rect x="778.6" y="15.5" width="1" height="2.5" fill="#e2e2e2"/><rect x="783.0" y="14" width="1" height="4" fill="#e2e2e2"/><rect x="787.4" y="15.5" width="1" height="2.5" fill="#e2e2e2"/><rect x="791.7" y="0" width="1" height="18" fill="#dcdcdc"/><rect x="796.1" y="15.5" width="1" height="2.5" fill="#e2e2e2"/><rect x="800.5" y="14" width="1" height="4" fill="#e2e2e2"/><rect x="804.9" y="15.5" width="1" height="2.5" fill="#e2e2e2"/><rect x="809.3" y="13" width="1" height="5" fill="#e2e2e2"/><rect x="813.7" y="15.5" width="1" height="2.5" fill="#e2e2e2"/><rect x="818.1" y="14" width="1" height="4" fill="#e2e2e2"/><rect x="822.5" y="15.5" width="1" height="2.5" fill="#e2e2e2"/><rect x="826.9" y="10" width="1" height="8" fill="#e2e2e2"/><rect x="831.3" y="15.5" width="1" height="2.5" fill="#e2e2e2"/><rect x="835.7" y="14" width="1" height="4" fill="#e2e2e2"/><rect x="840.1" y="15.5" width="1" height="2.5" fill="#e2e2e2"/><rect x="844.5" y="13" width="1" height="5" fill="#e2e2e2"/><rect x="848.9" y="15.5" width="1" height="2.5" fill="#e2e2e2"/><rect x="853.3" y="14" width="1" height="4" fill="#e2e2e2"/><rect x="857.7" y="15.5" width="1" height="2.5" fill="#e2e2e2"/><rect x="862.1" y="0" width="1" height="18" fill="#dcdcdc"/><rect x="866.5" y="15.5" width="1" height="2.5" fill="#e2e2e2"/><rect x="870.9" y="14" width="1" height="4" fill="#e2e2e2"/><rect x="875.3" y="15.5" width="1" height="2.5" fill="#e2e2e2"/><rect x="879.7" y="13" width="1" height="5" fill="#e2e2e2"/><rect x="884.1" y="15.5" width="1" height="2.5" fill="#e2e2e2"/><rect x="888.5" y="14" width="1" height="4" fill="#e2e2e2"/><rect x="892.9" y="15.5" width="1" height="2.5" fill="#e2e2e2"/><rect x="897.3" y="10" width="1" height="8" fill="#e2e2e2"/><rect x="901.7" y="15.5" width="1" height="2.5" fill="#e2e2e2"/><rect x="906.1" y="14" width="1" height="4" fill="#e2e2e2"/><rect x="910.5" y="15.5" width="1" height="2.5" fill="#e2e2e2"/><rect x="914.9" y="13" width="1" height="5" fill="#e2e2e2"/><rect x="919.3" y="15.5" width="1" height="2.5" fill="#e2e2e2"/><rect x="923.7" y="14" width="1" height="4" fill="#e2e2e2"/><rect x="928.1" y="15.5" width="1" height="2.5" fill="#e2e2e2"/><rect x="932.4" y="0" width="1" height="18" fill="#dcdcdc"/><rect x="936.8" y="15.5" width="1" height="2.5" fill="#e2e2e2"/><rect x="941.2" y="14" width="1" height="4" fill="#e2e2e2"/><rect x="945.6" y="15.5" width="1" height="2.5" fill="#e2e2e2"/><rect x="950.0" y="13" width="1" height="5" fill="#e2e2e2"/><rect x="954.4" y="15.5" width="1" height="2.5" fill="#e2e2e2"/><rect x="958.8" y="14" width="1" height="4" fill="#e2e2e2"/><rect x="963.2" y="15.5" width="1" height="2.5" fill="#e2e2e2"/><rect x="967.6" y="10" width="1" height="8" fill="#e2e2e2"/><rect x="972.0" y="15.5" width="1" height="2.5" fill="#e2e2e2"/><rect x="976.4" y="14" width="1" height="4" fill="#e2e2e2"/><rect x="980.8" y="15.5" width="1" height="2.5" fill="#e2e2e2"/><rect x="985.2" y="13" width="1" height="5" fill="#e2e2e2"/><rect x="989.6" y="15.5" width="1" height="2.5" fill="#e2e2e2"/><rect x="994.0" y="14" width="1" height="4" fill="#e2e2e2"/><rect x="998.4" y="15.5" width="1" height="2.5" fill="#e2e2e2"/><rect x="1002.8" y="0" width="1" height="18" fill="#dcdcdc"/><rect x="1007.2" y="15.5" width="1" height="2.5" fill="#e2e2e2"/><rect x="1011.6" y="14" width="1" height="4" fill="#e2e2e2"/><rect x="1016.0" y="15.5" width="1" height="2.5" fill="#e2e2e2"/><rect x="1020.4" y="13" width="1" height="5" fill="#e2e2e2"/><rect x="1024.8" y="15.5" width="1" height="2.5" fill="#e2e2e2"/><rect x="1029.2" y="14" width="1" height="4" fill="#e2e2e2"/><rect x="1033.6" y="15.5" width="1" height="2.5" fill="#e2e2e2"/><rect x="1038.0" y="10" width="1" height="8" fill="#e2e2e2"/><rect x="1042.4" y="15.5" width="1" height="2.5" fill="#e2e2e2"/><rect x="1046.8" y="14" width="1" height="4" fill="#e2e2e2"/><rect x="1051.2" y="15.5" width="1" height="2.5" fill="#e2e2e2"/><rect x="1055.6" y="13" width="1" height="5" fill="#e2e2e2"/><rect x="1060.0" y="15.5" width="1" height="2.5" fill="#e2e2e2"/><rect x="1064.4" y="14" width="1" height="4" fill="#e2e2e2"/><rect x="1068.8" y="15.5" width="1" height="2.5" fill="#e2e2e2"/><rect x="1073.2" y="0" width="1" height="18" fill="#dcdcdc"/><rect x="1077.5" y="15.5" width="1" height="2.5" fill="#e2e2e2"/><rect x="1081.9" y="14" width="1" height="4" fill="#e2e2e2"/><rect x="1086.3" y="15.5" width="1" height="2.5" fill="#e2e2e2"/><rect x="1090.7" y="13" width="1" height="5" fill="#e2e2e2"/><rect x="1095.1" y="15.5" width="1" height="2.5" fill="#e2e2e2"/><rect x="1099.5" y="14" width="1" height="4" fill="#e2e2e2"/><rect x="1103.9" y="15.5" width="1" height="2.5" fill="#e2e2e2"/><rect x="1108.3" y="10" width="1" height="8" fill="#e2e2e2"/><rect x="1112.7" y="15.5" width="1" height="2.5" fill="#e2e2e2"/><rect x="1117.1" y="14" width="1" height="4" fill="#e2e2e2"/><rect x="1121.5" y="15.5" width="1" height="2.5" fill="#e2e2e2"/><rect x="1125.9" y="13" width="1" height="5" fill="#e2e2e2"/><rect x="1130.3" y="15.5" width="1" height="2.5" fill="#e2e2e2"/><rect x="1134.7" y="14" width="1" height="4" fill="#e2e2e2"/><rect x="1139.1" y="15.5" width="1" height="2.5" fill="#e2e2e2"/><rect x="1143.5" y="0" width="1" height="18" fill="#dcdcdc"/><rect x="1147.9" y="15.5" width="1" height="2.5" fill="#e2e2e2"/><rect x="1152.3" y="14" width="1" height="4" fill="#e2e2e2"/><rect x="1156.7" y="15.5" width="1" height="2.5" fill="#e2e2e2"/><rect x="1161.1" y="13" width="1" height="5" fill="#e2e2e2"/><rect x="1165.5" y="15.5" width="1" height="2.5" fill="#e2e2e2"/><rect x="1169.9" y="14" width="1" height="4" fill="#e2e2e2"/><rect x="1174.3" y="15.5" width="1" height="2.5" fill="#e2e2e2"/><rect x="1178.7" y="10" width="1" height="8" fill="#e2e2e2"/><rect x="1183.1" y="15.5" width="1" height="2.5" fill="#e2e2e2"/><rect x="1187.5" y="14" width="1" height="4" fill="#e2e2e2"/><rect x="1191.9" y="15.5" width="1" height="2.5" fill="#e2e2e2"/></svg><div class="rn" style="left:75.0px;top:125px">0</div><div class="rn" style="left:145.3px;top:125px">1</div><div class="rn" style="left:215.7px;top:125px">2</div><div class="rn" style="left:286.1px;top:125px">3</div><div class="rn" style="left:356.4px;top:125px">4</div><div class="rn" style="left:426.8px;top:125px">5</div><div class="rn" style="left:497.1px;top:125px">6</div><div class="rn" style="left:567.4px;top:125px">7</div><div class="rn" style="left:637.8px;top:125px">8</div><div class="rn" style="left:708.1px;top:125px">9</div><div class="rn" style="left:778.5px;top:125px">10</div><div class="rn" style="left:848.8px;top:125px">11</div><div class="rn" style="left:919.2px;top:125px">12</div><div class="rn" style="left:989.5px;top:125px">13</div><div class="rn" style="left:1059.9px;top:125px">14</div><div class="rn" style="left:1130.2px;top:125px">15</div><div class="rn" style="left:1200.6px;top:125px">16</div><svg class="abs" style="left:54px;top:141px" width="19" height="688" viewBox="0 0 19 688"><rect x="15.5" y="3.5" width="2.5" height="1" fill="#e2e2e2"/><rect x="14" y="7.9" width="4" height="1" fill="#e2e2e2"/><rect x="15.5" y="12.3" width="2.5" height="1" fill="#e2e2e2"/><rect x="13" y="16.7" width="5" height="1" fill="#e2e2e2"/><rect x="15.5" y="21.1" width="2.5" height="1" fill="#e2e2e2"/><rect x="14" y="25.5" width="4" height="1" fill="#e2e2e2"/><rect x="15.5" y="29.9" width="2.5" height="1" fill="#e2e2e2"/><rect x="10" y="34.3" width="8" height="1" fill="#e2e2e2"/><rect x="15.5" y="38.7" width="2.5" height="1" fill="#e2e2e2"/><rect x="14" y="43.1" width="4" height="1" fill="#e2e2e2"/><rect x="15.5" y="47.5" width="2.5" height="1" fill="#e2e2e2"/><rect x="13" y="51.9" width="5" height="1" fill="#e2e2e2"/><rect x="15.5" y="56.3" width="2.5" height="1" fill="#e2e2e2"/><rect x="14" y="60.7" width="4" height="1" fill="#e2e2e2"/><rect x="15.5" y="65.1" width="2.5" height="1" fill="#e2e2e2"/><rect x="0" y="69.4" width="18" height="1" fill="#dcdcdc"/><rect x="15.5" y="73.8" width="2.5" height="1" fill="#e2e2e2"/><rect x="14" y="78.2" width="4" height="1" fill="#e2e2e2"/><rect x="15.5" y="82.6" width="2.5" height="1" fill="#e2e2e2"/><rect x="13" y="87.0" width="5" height="1" fill="#e2e2e2"/><rect x="15.5" y="91.4" width="2.5" height="1" fill="#e2e2e2"/><rect x="14" y="95.8" width="4" height="1" fill="#e2e2e2"/><rect x="15.5" y="100.2" width="2.5" height="1" fill="#e2e2e2"/><rect x="10" y="104.6" width="8" height="1" fill="#e2e2e2"/><rect x="15.5" y="109.0" width="2.5" height="1" fill="#e2e2e2"/><rect x="14" y="113.4" width="4" height="1" fill="#e2e2e2"/><rect x="15.5" y="117.8" width="2.5" height="1" fill="#e2e2e2"/><rect x="13" y="122.2" width="5" height="1" fill="#e2e2e2"/><rect x="15.5" y="126.6" width="2.5" height="1" fill="#e2e2e2"/><rect x="14" y="131.0" width="4" height="1" fill="#e2e2e2"/><rect x="15.5" y="135.4" width="2.5" height="1" fill="#e2e2e2"/><rect x="0" y="139.8" width="18" height="1" fill="#dcdcdc"/><rect x="15.5" y="144.2" width="2.5" height="1" fill="#e2e2e2"/><rect x="14" y="148.6" width="4" height="1" fill="#e2e2e2"/><rect x="15.5" y="153.0" width="2.5" height="1" fill="#e2e2e2"/><rect x="13" y="157.4" width="5" height="1" fill="#e2e2e2"/><rect x="15.5" y="161.8" width="2.5" height="1" fill="#e2e2e2"/><rect x="14" y="166.2" width="4" height="1" fill="#e2e2e2"/><rect x="15.5" y="170.6" width="2.5" height="1" fill="#e2e2e2"/><rect x="10" y="175.0" width="8" height="1" fill="#e2e2e2"/><rect x="15.5" y="179.4" width="2.5" height="1" fill="#e2e2e2"/><rect x="14" y="183.8" width="4" height="1" fill="#e2e2e2"/><rect x="15.5" y="188.2" width="2.5" height="1" fill="#e2e2e2"/><rect x="13" y="192.6" width="5" height="1" fill="#e2e2e2"/><rect x="15.5" y="197.0" width="2.5" height="1" fill="#e2e2e2"/><rect x="14" y="201.4" width="4" height="1" fill="#e2e2e2"/><rect x="15.5" y="205.8" width="2.5" height="1" fill="#e2e2e2"/><rect x="0" y="210.1" width="18" height="1" fill="#dcdcdc"/><rect x="15.5" y="214.5" width="2.5" height="1" fill="#e2e2e2"/><rect x="14" y="218.9" width="4" height="1" fill="#e2e2e2"/><rect x="15.5" y="223.3" width="2.5" height="1" fill="#e2e2e2"/><rect x="13" y="227.7" width="5" height="1" fill="#e2e2e2"/><rect x="15.5" y="232.1" width="2.5" height="1" fill="#e2e2e2"/><rect x="14" y="236.5" width="4" height="1" fill="#e2e2e2"/><rect x="15.5" y="240.9" width="2.5" height="1" fill="#e2e2e2"/><rect x="10" y="245.3" width="8" height="1" fill="#e2e2e2"/><rect x="15.5" y="249.7" width="2.5" height="1" fill="#e2e2e2"/><rect x="14" y="254.1" width="4" height="1" fill="#e2e2e2"/><rect x="15.5" y="258.5" width="2.5" height="1" fill="#e2e2e2"/><rect x="13" y="262.9" width="5" height="1" fill="#e2e2e2"/><rect x="15.5" y="267.3" width="2.5" height="1" fill="#e2e2e2"/><rect x="14" y="271.7" width="4" height="1" fill="#e2e2e2"/><rect x="15.5" y="276.1" width="2.5" height="1" fill="#e2e2e2"/><rect x="0" y="280.5" width="18" height="1" fill="#dcdcdc"/><rect x="15.5" y="284.9" width="2.5" height="1" fill="#e2e2e2"/><rect x="14" y="289.3" width="4" height="1" fill="#e2e2e2"/><rect x="15.5" y="293.7" width="2.5" height="1" fill="#e2e2e2"/><rect x="13" y="298.1" width="5" height="1" fill="#e2e2e2"/><rect x="15.5" y="302.5" width="2.5" height="1" fill="#e2e2e2"/><rect x="14" y="306.9" width="4" height="1" fill="#e2e2e2"/><rect x="15.5" y="311.3" width="2.5" height="1" fill="#e2e2e2"/><rect x="10" y="315.7" width="8" height="1" fill="#e2e2e2"/><rect x="15.5" y="320.1" width="2.5" height="1" fill="#e2e2e2"/><rect x="14" y="324.5" width="4" height="1" fill="#e2e2e2"/><rect x="15.5" y="328.9" width="2.5" height="1" fill="#e2e2e2"/><rect x="13" y="333.3" width="5" height="1" fill="#e2e2e2"/><rect x="15.5" y="337.7" width="2.5" height="1" fill="#e2e2e2"/><rect x="14" y="342.1" width="4" height="1" fill="#e2e2e2"/><rect x="15.5" y="346.5" width="2.5" height="1" fill="#e2e2e2"/><rect x="0" y="350.9" width="18" height="1" fill="#dcdcdc"/><rect x="15.5" y="355.2" width="2.5" height="1" fill="#e2e2e2"/><rect x="14" y="359.6" width="4" height="1" fill="#e2e2e2"/><rect x="15.5" y="364.0" width="2.5" height="1" fill="#e2e2e2"/><rect x="13" y="368.4" width="5" height="1" fill="#e2e2e2"/><rect x="15.5" y="372.8" width="2.5" height="1" fill="#e2e2e2"/><rect x="14" y="377.2" width="4" height="1" fill="#e2e2e2"/><rect x="15.5" y="381.6" width="2.5" height="1" fill="#e2e2e2"/><rect x="10" y="386.0" width="8" height="1" fill="#e2e2e2"/><rect x="15.5" y="390.4" width="2.5" height="1" fill="#e2e2e2"/><rect x="14" y="394.8" width="4" height="1" fill="#e2e2e2"/><rect x="15.5" y="399.2" width="2.5" height="1" fill="#e2e2e2"/><rect x="13" y="403.6" width="5" height="1" fill="#e2e2e2"/><rect x="15.5" y="408.0" width="2.5" height="1" fill="#e2e2e2"/><rect x="14" y="412.4" width="4" height="1" fill="#e2e2e2"/><rect x="15.5" y="416.8" width="2.5" height="1" fill="#e2e2e2"/><rect x="0" y="421.2" width="18" height="1" fill="#dcdcdc"/><rect x="15.5" y="425.6" width="2.5" height="1" fill="#e2e2e2"/><rect x="14" y="430.0" width="4" height="1" fill="#e2e2e2"/><rect x="15.5" y="434.4" width="2.5" height="1" fill="#e2e2e2"/><rect x="13" y="438.8" width="5" height="1" fill="#e2e2e2"/><rect x="15.5" y="443.2" width="2.5" height="1" fill="#e2e2e2"/><rect x="14" y="447.6" width="4" height="1" fill="#e2e2e2"/><rect x="15.5" y="452.0" width="2.5" height="1" fill="#e2e2e2"/><rect x="10" y="456.4" width="8" height="1" fill="#e2e2e2"/><rect x="15.5" y="460.8" width="2.5" height="1" fill="#e2e2e2"/><rect x="14" y="465.2" width="4" height="1" fill="#e2e2e2"/><rect x="15.5" y="469.6" width="2.5" height="1" fill="#e2e2e2"/><rect x="13" y="474.0" width="5" height="1" fill="#e2e2e2"/><rect x="15.5" y="478.4" width="2.5" height="1" fill="#e2e2e2"/><rect x="14" y="482.8" width="4" height="1" fill="#e2e2e2"/><rect x="15.5" y="487.2" width="2.5" height="1" fill="#e2e2e2"/><rect x="0" y="491.5" width="18" height="1" fill="#dcdcdc"/><rect x="15.5" y="495.9" width="2.5" height="1" fill="#e2e2e2"/><rect x="14" y="500.3" width="4" height="1" fill="#e2e2e2"/><rect x="15.5" y="504.7" width="2.5" height="1" fill="#e2e2e2"/><rect x="13" y="509.1" width="5" height="1" fill="#e2e2e2"/><rect x="15.5" y="513.5" width="2.5" height="1" fill="#e2e2e2"/><rect x="14" y="517.9" width="4" height="1" fill="#e2e2e2"/><rect x="15.5" y="522.3" width="2.5" height="1" fill="#e2e2e2"/><rect x="10" y="526.7" width="8" height="1" fill="#e2e2e2"/><rect x="15.5" y="531.1" width="2.5" height="1" fill="#e2e2e2"/><rect x="14" y="535.5" width="4" height="1" fill="#e2e2e2"/><rect x="15.5" y="539.9" width="2.5" height="1" fill="#e2e2e2"/><rect x="13" y="544.3" width="5" height="1" fill="#e2e2e2"/><rect x="15.5" y="548.7" width="2.5" height="1" fill="#e2e2e2"/><rect x="14" y="553.1" width="4" height="1" fill="#e2e2e2"/><rect x="15.5" y="557.5" width="2.5" height="1" fill="#e2e2e2"/><rect x="0" y="561.9" width="18" height="1" fill="#dcdcdc"/><rect x="15.5" y="566.3" width="2.5" height="1" fill="#e2e2e2"/><rect x="14" y="570.7" width="4" height="1" fill="#e2e2e2"/><rect x="15.5" y="575.1" width="2.5" height="1" fill="#e2e2e2"/><rect x="13" y="579.5" width="5" height="1" fill="#e2e2e2"/><rect x="15.5" y="583.9" width="2.5" height="1" fill="#e2e2e2"/><rect x="14" y="588.3" width="4" height="1" fill="#e2e2e2"/><rect x="15.5" y="592.7" width="2.5" height="1" fill="#e2e2e2"/><rect x="10" y="597.1" width="8" height="1" fill="#e2e2e2"/><rect x="15.5" y="601.5" width="2.5" height="1" fill="#e2e2e2"/><rect x="14" y="605.9" width="4" height="1" fill="#e2e2e2"/><rect x="15.5" y="610.3" width="2.5" height="1" fill="#e2e2e2"/><rect x="13" y="614.7" width="5" height="1" fill="#e2e2e2"/><rect x="15.5" y="619.1" width="2.5" height="1" fill="#e2e2e2"/><rect x="14" y="623.5" width="4" height="1" fill="#e2e2e2"/><rect x="15.5" y="627.9" width="2.5" height="1" fill="#e2e2e2"/><rect x="0" y="632.2" width="18" height="1" fill="#dcdcdc"/><rect x="15.5" y="636.6" width="2.5" height="1" fill="#e2e2e2"/><rect x="14" y="641.0" width="4" height="1" fill="#e2e2e2"/><rect x="15.5" y="645.4" width="2.5" height="1" fill="#e2e2e2"/><rect x="13" y="649.8" width="5" height="1" fill="#e2e2e2"/><rect x="15.5" y="654.2" width="2.5" height="1" fill="#e2e2e2"/><rect x="14" y="658.6" width="4" height="1" fill="#e2e2e2"/><rect x="15.5" y="663.0" width="2.5" height="1" fill="#e2e2e2"/><rect x="10" y="667.4" width="8" height="1" fill="#e2e2e2"/><rect x="15.5" y="671.8" width="2.5" height="1" fill="#e2e2e2"/><rect x="14" y="676.2" width="4" height="1" fill="#e2e2e2"/><rect x="15.5" y="680.6" width="2.5" height="1" fill="#e2e2e2"/><rect x="13" y="685.0" width="5" height="1" fill="#e2e2e2"/></svg><div class="rn" style="left:55.2px;top:141.2px;width:10px;height:10px;font-size:9.8px;transform:rotate(-90deg);transform-origin:center;text-align:center">0</div><div class="rn" style="left:55.2px;top:211.5px;width:10px;height:10px;font-size:9.8px;transform:rotate(-90deg);transform-origin:center;text-align:center">1</div><div class="rn" style="left:55.2px;top:281.9px;width:10px;height:10px;font-size:9.8px;transform:rotate(-90deg);transform-origin:center;text-align:center">2</div><div class="rn" style="left:55.2px;top:352.2px;width:10px;height:10px;font-size:9.8px;transform:rotate(-90deg);transform-origin:center;text-align:center">3</div><div class="rn" style="left:55.2px;top:422.6px;width:10px;height:10px;font-size:9.8px;transform:rotate(-90deg);transform-origin:center;text-align:center">4</div><div class="rn" style="left:55.2px;top:493.0px;width:10px;height:10px;font-size:9.8px;transform:rotate(-90deg);transform-origin:center;text-align:center">5</div><div class="rn" style="left:55.2px;top:563.3px;width:10px;height:10px;font-size:9.8px;transform:rotate(-90deg);transform-origin:center;text-align:center">6</div><div class="rn" style="left:55.2px;top:633.6px;width:10px;height:10px;font-size:9.8px;transform:rotate(-90deg);transform-origin:center;text-align:center">7</div><div class="rn" style="left:55.2px;top:704.0px;width:10px;height:10px;font-size:9.8px;transform:rotate(-90deg);transform-origin:center;text-align:center">8</div><div class="rn" style="left:55.2px;top:774.4px;width:10px;height:10px;font-size:9.8px;transform:rotate(-90deg);transform-origin:center;text-align:center">9</div><div class="abs" style="left:54px;top:123px;width:18px;height:18px;background:#f4f4f4"></div>
<!--CANVAS-START-->
<svg class="abs" style="left:0;top:0" width="1500" height="842" viewBox="0 0 1500 842">
<defs><clipPath id="gb"><ellipse cx="605.3" cy="294.6" rx="60.8" ry="65.8"/></clipPath><clipPath id="rbclip"><path d="M707.5 379.5 C 693 373, 652 340, 652 296 C 652 262, 678 238, 710.5 238 C 743 238, 769 262, 769 296 C 769 340, 722 373, 707.5 379.5 Z"/></clipPath><clipPath id="potclip"><path d="M565 496 H747.2 C 745 540, 735 590, 712 622 Q 708 628 700 629.5 Q 655 636 612 629.5 Q 604 628 600 622 C 577 590, 567 540, 565 496 Z"/></clipPath></defs>
<rect x="122.5" y="185.7" width="703.8" height="492.1" fill="#b35bef" stroke="#9a6aa8" stroke-width="1"/>
<path d="M474.5 185.7 V678" stroke="#9249c8" stroke-width="1.3" stroke-dasharray="7.4 8.3"/>
<rect x="493.8" y="203.4" width="317" height="457.8" fill="#4f0f8d"/>
<rect x="497.3" y="207" width="310" height="450.6" fill="none" stroke="#5a1a98" stroke-width="1.5"/>
<rect x="504" y="213.2" width="298.5" height="438.3" fill="#9a9a9a"/>
<g fill="#8a8a8a" stroke="#8a8a8a" stroke-width="15" stroke-linejoin="round"><ellipse cx="605.3" cy="294.6" rx="61.3" ry="66.3"/><path d="M599 357 Q599 364 592.5 369 Q590.5 372.5 594 374 Q601 376.5 608 374 Q611.5 372.5 609.5 369 Q606 364 606.5 357 Z"/><rect x="597" y="372" width="8" height="100"/><path d="M707.5 379.5 C 693 373, 652 340, 652 296 C 652 262, 678 238, 710.5 238 C 743 238, 769 262, 769 296 C 769 340, 722 373, 707.5 379.5 Z"/><path d="M701 376 Q696.5 383.5 701 385 H714 Q718.5 383.5 714 376 Z"/><rect x="704" y="384" width="8.5" height="90"/><path d="M627.6 367.5 C 630.6 372.5, 634.6 379.5, 634.1 386.5 Q 633.6 391 631.6 391 H623.6 Q 621.6 391 621.1 386.5 C 620.6 379.5, 624.6 372.5, 627.6 367.5 Z"/><rect x="621.6" y="391" width="12" height="59"/><path d="M653.7 357 C 656.7 362, 660.7 369, 660.2 376 Q 659.7 381 657.7 381 H649.7 Q 647.7 381 647.2 376 C 646.7 369, 650.7 362, 653.7 357 Z"/><rect x="647.7" y="381" width="12" height="39"/><path d="M680.5 367.5 C 683.5 372.5, 687.5 379.5, 687.0 386.5 Q 686.5 391 684.5 391 H676.5 Q 674.5 391 674.0 386.5 C 673.5 379.5, 677.5 372.5, 680.5 367.5 Z"/><rect x="674.5" y="391" width="12" height="59"/><path d="M 5 -2.5 C 14.5 -8.2, 26.3 -13.2, 35.4 -12.8 C 43.1 -11.6, 45.4 -5.9, 45.4 0 C 45.4 5.9, 43.1 11.6, 35.4 12.8 C 26.3 13.2, 14.5 8.2, 5 2.5 Z" transform="translate(568.8 419.5) rotate(-106.0)"/><path d="M 5 -2.5 C 14.5 -8.2, 26.3 -13.2, 35.4 -12.8 C 43.1 -11.6, 45.4 -5.9, 45.4 0 C 45.4 5.9, 43.1 11.6, 35.4 12.8 C 26.3 13.2, 14.5 8.2, 5 2.5 Z" transform="translate(568.8 419.5) rotate(-56.0)"/><path d="M 5 -2.5 C 14.5 -8.2, 26.3 -13.2, 35.4 -12.8 C 43.1 -11.6, 45.4 -5.9, 45.4 0 C 45.4 5.9, 43.1 11.6, 35.4 12.8 C 26.3 13.2, 14.5 8.2, 5 2.5 Z" transform="translate(568.8 419.5) rotate(7.0)"/><path d="M 5 -2.5 C 14.5 -8.2, 26.3 -13.2, 35.4 -12.8 C 43.1 -11.6, 45.4 -5.9, 45.4 0 C 45.4 5.9, 43.1 11.6, 35.4 12.8 C 26.3 13.2, 14.5 8.2, 5 2.5 Z" transform="translate(568.8 419.5) rotate(69.0)"/><path d="M 5 -2.5 C 14.5 -8.2, 26.3 -13.2, 35.4 -12.8 C 43.1 -11.6, 45.4 -5.9, 45.4 0 C 45.4 5.9, 43.1 11.6, 35.4 12.8 C 26.3 13.2, 14.5 8.2, 5 2.5 Z" transform="translate(568.8 419.5) rotate(122.0)"/><path d="M 5 -2.5 C 14.5 -8.2, 26.3 -13.2, 35.4 -12.8 C 43.1 -11.6, 45.4 -5.9, 45.4 0 C 45.4 5.9, 43.1 11.6, 35.4 12.8 C 26.3 13.2, 14.5 8.2, 5 2.5 Z" transform="translate(568.8 419.5) rotate(-176.0)"/><path d="M560 465.3 H750 Q761.5 465.5 762 477 Q762.3 488 758 492.5 Q754.5 496 746 496.8 Q655 504 564 496.8 Q555.5 496 552 492.5 Q547.7 488 547.5 477 Q548 465.5 560 465.3 Z"/><path d="M565 496 H747.2 C 745 540, 735 590, 712 622 Q 708 628 700 629.5 Q 655 636 612 629.5 Q 604 628 600 622 C 577 590, 567 540, 565 496 Z"/><circle cx="655.5" cy="455" r="34"/><circle cx="655.5" cy="424.0" r="23.5"/><circle cx="628.7" cy="439.5" r="23.5"/><circle cx="628.7" cy="470.5" r="23.5"/><circle cx="655.5" cy="486.0" r="23.5"/><circle cx="682.3" cy="470.5" r="23.5"/><circle cx="682.3" cy="439.5" r="23.5"/><circle cx="655.5" cy="455" r="34"/><circle cx="713.4" cy="435.2" r="10"/><circle cx="708.5" cy="424.8" r="9.2"/><circle cx="702.0" cy="436.6" r="9.2"/><circle cx="711.2" cy="446.5" r="9.2"/><circle cx="723.5" cy="440.8" r="9.2"/><circle cx="721.8" cy="427.4" r="9.2"/><circle cx="713.4" cy="435.2" r="10"/><circle cx="753.3" cy="429.3" r="11.5"/><circle cx="757.5" cy="413.6" r="11.4"/><circle cx="739.6" cy="420.4" r="11.4"/><circle cx="740.6" cy="439.6" r="11.4"/><circle cx="759.1" cy="444.5" r="11.4"/><circle cx="769.6" cy="428.4" r="11.4"/><circle cx="753.3" cy="429.3" r="11.5"/><circle cx="729" cy="462.3" r="16.3"/><circle cx="743.6" cy="459.7" r="6.3"/><circle cx="737.5" cy="450.2" r="6.3"/><circle cx="726.4" cy="447.7" r="6.3"/><circle cx="716.9" cy="453.8" r="6.3"/><circle cx="714.4" cy="464.9" r="6.3"/><circle cx="720.5" cy="474.4" r="6.3"/><circle cx="731.6" cy="476.9" r="6.3"/><circle cx="741.1" cy="470.8" r="6.3"/><circle cx="729" cy="462.3" r="16.3"/><circle cx="591.3" cy="470.2" r="9.5"/><circle cx="596.9" cy="460.4" r="9"/><circle cx="583.7" cy="461.8" r="9"/><circle cx="581.0" cy="474.8" r="9"/><circle cx="592.5" cy="481.4" r="9"/><circle cx="602.4" cy="472.5" r="9"/><circle cx="591.3" cy="470.2" r="9.5"/><path d="M600 340 L670 300 L712 370 L712 440 L600 440 Z"/></g>
<g fill="#fafafa" stroke="#fafafa" stroke-width="13.4" stroke-linejoin="round"><ellipse cx="605.3" cy="294.6" rx="61.3" ry="66.3"/><path d="M599 357 Q599 364 592.5 369 Q590.5 372.5 594 374 Q601 376.5 608 374 Q611.5 372.5 609.5 369 Q606 364 606.5 357 Z"/><rect x="597" y="372" width="8" height="100"/><path d="M707.5 379.5 C 693 373, 652 340, 652 296 C 652 262, 678 238, 710.5 238 C 743 238, 769 262, 769 296 C 769 340, 722 373, 707.5 379.5 Z"/><path d="M701 376 Q696.5 383.5 701 385 H714 Q718.5 383.5 714 376 Z"/><rect x="704" y="384" width="8.5" height="90"/><path d="M627.6 367.5 C 630.6 372.5, 634.6 379.5, 634.1 386.5 Q 633.6 391 631.6 391 H623.6 Q 621.6 391 621.1 386.5 C 620.6 379.5, 624.6 372.5, 627.6 367.5 Z"/><rect x="621.6" y="391" width="12" height="59"/><path d="M653.7 357 C 656.7 362, 660.7 369, 660.2 376 Q 659.7 381 657.7 381 H649.7 Q 647.7 381 647.2 376 C 646.7 369, 650.7 362, 653.7 357 Z"/><rect x="647.7" y="381" width="12" height="39"/><path d="M680.5 367.5 C 683.5 372.5, 687.5 379.5, 687.0 386.5 Q 686.5 391 684.5 391 H676.5 Q 674.5 391 674.0 386.5 C 673.5 379.5, 677.5 372.5, 680.5 367.5 Z"/><rect x="674.5" y="391" width="12" height="59"/><path d="M 5 -2.5 C 14.5 -8.2, 26.3 -13.2, 35.4 -12.8 C 43.1 -11.6, 45.4 -5.9, 45.4 0 C 45.4 5.9, 43.1 11.6, 35.4 12.8 C 26.3 13.2, 14.5 8.2, 5 2.5 Z" transform="translate(568.8 419.5) rotate(-106.0)"/><path d="M 5 -2.5 C 14.5 -8.2, 26.3 -13.2, 35.4 -12.8 C 43.1 -11.6, 45.4 -5.9, 45.4 0 C 45.4 5.9, 43.1 11.6, 35.4 12.8 C 26.3 13.2, 14.5 8.2, 5 2.5 Z" transform="translate(568.8 419.5) rotate(-56.0)"/><path d="M 5 -2.5 C 14.5 -8.2, 26.3 -13.2, 35.4 -12.8 C 43.1 -11.6, 45.4 -5.9, 45.4 0 C 45.4 5.9, 43.1 11.6, 35.4 12.8 C 26.3 13.2, 14.5 8.2, 5 2.5 Z" transform="translate(568.8 419.5) rotate(7.0)"/><path d="M 5 -2.5 C 14.5 -8.2, 26.3 -13.2, 35.4 -12.8 C 43.1 -11.6, 45.4 -5.9, 45.4 0 C 45.4 5.9, 43.1 11.6, 35.4 12.8 C 26.3 13.2, 14.5 8.2, 5 2.5 Z" transform="translate(568.8 419.5) rotate(69.0)"/><path d="M 5 -2.5 C 14.5 -8.2, 26.3 -13.2, 35.4 -12.8 C 43.1 -11.6, 45.4 -5.9, 45.4 0 C 45.4 5.9, 43.1 11.6, 35.4 12.8 C 26.3 13.2, 14.5 8.2, 5 2.5 Z" transform="translate(568.8 419.5) rotate(122.0)"/><path d="M 5 -2.5 C 14.5 -8.2, 26.3 -13.2, 35.4 -12.8 C 43.1 -11.6, 45.4 -5.9, 45.4 0 C 45.4 5.9, 43.1 11.6, 35.4 12.8 C 26.3 13.2, 14.5 8.2, 5 2.5 Z" transform="translate(568.8 419.5) rotate(-176.0)"/><path d="M560 465.3 H750 Q761.5 465.5 762 477 Q762.3 488 758 492.5 Q754.5 496 746 496.8 Q655 504 564 496.8 Q555.5 496 552 492.5 Q547.7 488 547.5 477 Q548 465.5 560 465.3 Z"/><path d="M565 496 H747.2 C 745 540, 735 590, 712 622 Q 708 628 700 629.5 Q 655 636 612 629.5 Q 604 628 600 622 C 577 590, 567 540, 565 496 Z"/><circle cx="655.5" cy="455" r="34"/><circle cx="655.5" cy="424.0" r="23.5"/><circle cx="628.7" cy="439.5" r="23.5"/><circle cx="628.7" cy="470.5" r="23.5"/><circle cx="655.5" cy="486.0" r="23.5"/><circle cx="682.3" cy="470.5" r="23.5"/><circle cx="682.3" cy="439.5" r="23.5"/><circle cx="655.5" cy="455" r="34"/><circle cx="713.4" cy="435.2" r="10"/><circle cx="708.5" cy="424.8" r="9.2"/><circle cx="702.0" cy="436.6" r="9.2"/><circle cx="711.2" cy="446.5" r="9.2"/><circle cx="723.5" cy="440.8" r="9.2"/><circle cx="721.8" cy="427.4" r="9.2"/><circle cx="713.4" cy="435.2" r="10"/><circle cx="753.3" cy="429.3" r="11.5"/><circle cx="757.5" cy="413.6" r="11.4"/><circle cx="739.6" cy="420.4" r="11.4"/><circle cx="740.6" cy="439.6" r="11.4"/><circle cx="759.1" cy="444.5" r="11.4"/><circle cx="769.6" cy="428.4" r="11.4"/><circle cx="753.3" cy="429.3" r="11.5"/><circle cx="729" cy="462.3" r="16.3"/><circle cx="743.6" cy="459.7" r="6.3"/><circle cx="737.5" cy="450.2" r="6.3"/><circle cx="726.4" cy="447.7" r="6.3"/><circle cx="716.9" cy="453.8" r="6.3"/><circle cx="714.4" cy="464.9" r="6.3"/><circle cx="720.5" cy="474.4" r="6.3"/><circle cx="731.6" cy="476.9" r="6.3"/><circle cx="741.1" cy="470.8" r="6.3"/><circle cx="729" cy="462.3" r="16.3"/><circle cx="591.3" cy="470.2" r="9.5"/><circle cx="596.9" cy="460.4" r="9"/><circle cx="583.7" cy="461.8" r="9"/><circle cx="581.0" cy="474.8" r="9"/><circle cx="592.5" cy="481.4" r="9"/><circle cx="602.4" cy="472.5" r="9"/><circle cx="591.3" cy="470.2" r="9.5"/><path d="M600 340 L670 300 L712 370 L712 440 L600 440 Z"/></g>
<rect x="597" y="372" width="7.4" height="95" fill="#b3de59" stroke="#66962a" stroke-width="0.8"/>
<rect x="704.3" y="384" width="7.3" height="85" fill="#f8b122" stroke="#b9780f" stroke-width="0.8"/>
<g fill="#ee0024" stroke="#a80018" stroke-width="1"><path d="M701 376 Q696.5 383.5 701 385 H714 Q718.5 383.5 714 376 Z"/><path d="M707.5 379.5 C 693 373, 652 340, 652 296 C 652 262, 678 238, 710.5 238 C 743 238, 769 262, 769 296 C 769 340, 722 373, 707.5 379.5 Z"/></g>
<g clip-path="url(#rbclip)"><ellipse cx="709.2" cy="247.9" rx="8" ry="4" transform="rotate(0 709.2 247.9)" fill="#f8b122" stroke="#b9780f" stroke-width="0.9"/><ellipse cx="670.7" cy="264" rx="9.5" ry="3.6" transform="rotate(-42 670.7 264)" fill="#f8b122" stroke="#b9780f" stroke-width="0.9"/><ellipse cx="695.7" cy="265.5" rx="9.2" ry="8.6" transform="rotate(0 695.7 265.5)" fill="#f8b122" stroke="#b9780f" stroke-width="0.9"/><ellipse cx="737" cy="267" rx="8" ry="9" transform="rotate(-25 737 267)" fill="#f8b122" stroke="#b9780f" stroke-width="0.9"/><ellipse cx="758.4" cy="278" rx="2.4" ry="7.2" transform="rotate(-22 758.4 278)" fill="#f8b122" stroke="#b9780f" stroke-width="0.9"/><ellipse cx="673.9" cy="301.3" rx="9.3" ry="9.6" transform="rotate(0 673.9 301.3)" fill="#f8b122" stroke="#b9780f" stroke-width="0.9"/><ellipse cx="717.5" cy="302.5" rx="10.4" ry="10.4" transform="rotate(0 717.5 302.5)" fill="#f8b122" stroke="#b9780f" stroke-width="0.9"/><ellipse cx="756.4" cy="304" rx="6" ry="10.6" transform="rotate(0 756.4 304)" fill="#f8b122" stroke="#b9780f" stroke-width="0.9"/><ellipse cx="664.5" cy="335" rx="3" ry="8.3" transform="rotate(-25 664.5 335)" fill="#f8b122" stroke="#b9780f" stroke-width="0.9"/><ellipse cx="693" cy="340.3" rx="9.2" ry="8.6" transform="rotate(0 693 340.3)" fill="#f8b122" stroke="#b9780f" stroke-width="0.9"/><ellipse cx="733.5" cy="341" rx="7.8" ry="8.6" transform="rotate(15 733.5 341)" fill="#f8b122" stroke="#b9780f" stroke-width="0.9"/></g>
<g fill="#9cc640" stroke="#66962a" stroke-width="1.4"><path d="M599 357 Q599 364 592.5 369 Q590.5 372.5 594 374 Q601 376.5 608 374 Q611.5 372.5 609.5 369 Q606 364 606.5 357 Z"/><ellipse cx="605.3" cy="294.6" rx="61.3" ry="66.3"/></g>
<g clip-path="url(#gb)" id="gstripes"><ellipse cx="614" cy="237.3" rx="20" ry="5.2" transform="rotate(13 614 237.3)" fill="#b3de59" stroke="#66962a" stroke-width="1.25"/><path d="M561.3 253.7 C 564 248, 569 244, 573.3 243 C 585 248, 602 255.5, 626.7 259.7 C 637 261, 645 257, 642 246.3 C 650 250, 655.5 260, 654 268.3 C 652 276.5, 641 277.5, 632 276.5 C 613 274, 586 264.5, 561.3 253.7 Z" fill="#b3de59" stroke="#66962a" stroke-width="1.25"/><path d="M548.7 277.7 C 556 282, 564 286, 573.3 289.7 C 582 293, 591 296, 600 298.3 C 609 300.3, 618 301.4, 626.7 301.7 C 634 301.9, 641 301.3, 646.7 300.3 C 652 299, 657 297, 660 293.7 C 662.5 291, 664 287, 663.3 283 C 665 287, 666 291, 666.2 295 C 666.3 299, 666 302.5, 665.3 305.7 C 663.5 312, 659 317, 653.3 320.3 C 646 323.2, 636 323.6, 626.7 323 C 618 322.2, 609 320.6, 600 318.3 C 591 315.8, 582 312.4, 573.3 308.3 C 564 304, 555 300, 544 295 Z" fill="#b3de59" stroke="#66962a" stroke-width="1.25"/><path d="M554.2 326.6 C 563 331.5, 573 335.5, 584 338.5 C 594 341.4, 604 343.7, 613.6 344.4 C 623 345, 633 344.5, 640.4 341.5 C 644 340, 646.5 338.5, 647.8 337 C 648.3 339.5, 647.8 342, 646.3 344.4 C 642 350, 636 353.2, 628.5 354.8 C 619 356.5, 608 356.3, 598.8 354.8 C 588 352.8, 578 349.5, 569 344.4 C 563 341, 558.5 337, 555.7 332.6 Z" fill="#b3de59" stroke="#66962a" stroke-width="1.25"/></g>
<g fill="#f94fa6" stroke="#c02a78" stroke-width="0.8"><rect x="621.6" y="391" width="12" height="59"/></g><g fill="#fbe063" stroke="#b89a34" stroke-width="1.2"><path d="M627.6 367.5 C 630.6 372.5, 634.6 379.5, 634.1 386.5 Q 633.6 391 631.6 391 H623.6 Q 621.6 391 621.1 386.5 C 620.6 379.5, 624.6 372.5, 627.6 367.5 Z"/></g>
<g fill="#f94fa6" stroke="#c02a78" stroke-width="0.8"><rect x="647.7" y="381" width="12" height="39"/></g><g fill="#fbe063" stroke="#b89a34" stroke-width="1.2"><path d="M653.7 357 C 656.7 362, 660.7 369, 660.2 376 Q 659.7 381 657.7 381 H649.7 Q 647.7 381 647.2 376 C 646.7 369, 650.7 362, 653.7 357 Z"/></g>
<g fill="#f94fa6" stroke="#c02a78" stroke-width="0.8"><rect x="674.5" y="391" width="12" height="59"/></g><g fill="#fbe063" stroke="#b89a34" stroke-width="1.2"><path d="M680.5 367.5 C 683.5 372.5, 687.5 379.5, 687.0 386.5 Q 686.5 391 684.5 391 H676.5 Q 674.5 391 674.0 386.5 C 673.5 379.5, 677.5 372.5, 680.5 367.5 Z"/></g>
<g fill="#f8b122" stroke="#c2620a" stroke-width="1"><path d="M565 496 H747.2 C 745 540, 735 590, 712 622 Q 708 628 700 629.5 Q 655 636 612 629.5 Q 604 628 600 622 C 577 590, 567 540, 565 496 Z"/></g>
<g clip-path="url(#potclip)"><path d="M540 554.8 H590.9 V572 H599.9 V554.8 H615.1 V572 H624.1 V554.8 H639.5 V572 H648.5 V554.8 H663.7 V572 H672.7 V554.8 H688.0 V572 H697.0 V554.8 H712.1 V572 H721.1 V554.8 H780 V650 H540 Z" fill="#fa8419" stroke="#c2620a" stroke-width="1.15"/><path d="M583.3 515.4 C 587.3 521, 592.8 531, 592.5 540 C 592.3 546.5, 587.3 549, 586.3 550.5 V556 H580.3 V550.5 C 579.3 549, 574.3 546.5, 574.0999999999999 540 C 573.8 531, 579.3 521, 583.3 515.4 Z" fill="#fa8419" stroke="#c2620a" stroke-width="1.15"/><rect x="580.8" y="553" width="5" height="4" fill="#fa8419"/><path d="M583.3 531 C 585.3 534, 587.5 538, 587.3 541.5 C 587.0999999999999 545, 584.8 546, 583.3 546 C 581.8 546, 579.5 545, 579.3 541.5 C 579.0999999999999 538, 581.3 534, 583.3 531 Z" fill="#f8b122" stroke="#c2620a" stroke-width="0.8"/><path d="M607.3 515.4 C 611.3 521, 616.8 531, 616.5 540 C 616.3 546.5, 611.3 549, 610.3 550.5 V556 H604.3 V550.5 C 603.3 549, 598.3 546.5, 598.0999999999999 540 C 597.8 531, 603.3 521, 607.3 515.4 Z" fill="#fa8419" stroke="#c2620a" stroke-width="1.15"/><rect x="604.8" y="553" width="5" height="4" fill="#fa8419"/><path d="M607.3 531 C 609.3 534, 611.5 538, 611.3 541.5 C 611.0999999999999 545, 608.8 546, 607.3 546 C 605.8 546, 603.5 545, 603.3 541.5 C 603.0999999999999 538, 605.3 534, 607.3 531 Z" fill="#f8b122" stroke="#c2620a" stroke-width="0.8"/><path d="M631.6 515.4 C 635.6 521, 641.1 531, 640.8000000000001 540 C 640.6 546.5, 635.6 549, 634.6 550.5 V556 H628.6 V550.5 C 627.6 549, 622.6 546.5, 622.4 540 C 622.1 531, 627.6 521, 631.6 515.4 Z" fill="#fa8419" stroke="#c2620a" stroke-width="1.15"/><rect x="629.1" y="553" width="5" height="4" fill="#fa8419"/><path d="M631.6 531 C 633.6 534, 635.8000000000001 538, 635.6 541.5 C 635.4 545, 633.1 546, 631.6 546 C 630.1 546, 627.8000000000001 545, 627.6 541.5 C 627.4 538, 629.6 534, 631.6 531 Z" fill="#f8b122" stroke="#c2620a" stroke-width="0.8"/><path d="M656 515.4 C 660 521, 665.5 531, 665.2 540 C 665 546.5, 660 549, 659 550.5 V556 H653 V550.5 C 652 549, 647 546.5, 646.8 540 C 646.5 531, 652 521, 656 515.4 Z" fill="#fa8419" stroke="#c2620a" stroke-width="1.15"/><rect x="653.5" y="553" width="5" height="4" fill="#fa8419"/><path d="M656 531 C 658 534, 660.2 538, 660 541.5 C 659.8 545, 657.5 546, 656 546 C 654.5 546, 652.2 545, 652 541.5 C 651.8 538, 654 534, 656 531 Z" fill="#f8b122" stroke="#c2620a" stroke-width="0.8"/><path d="M680.1 515.4 C 684.1 521, 689.6 531, 689.3000000000001 540 C 689.1 546.5, 684.1 549, 683.1 550.5 V556 H677.1 V550.5 C 676.1 549, 671.1 546.5, 670.9 540 C 670.6 531, 676.1 521, 680.1 515.4 Z" fill="#fa8419" stroke="#c2620a" stroke-width="1.15"/><rect x="677.6" y="553" width="5" height="4" fill="#fa8419"/><path d="M680.1 531 C 682.1 534, 684.3000000000001 538, 684.1 541.5 C 683.9 545, 681.6 546, 680.1 546 C 678.6 546, 676.3000000000001 545, 676.1 541.5 C 675.9 538, 678.1 534, 680.1 531 Z" fill="#f8b122" stroke="#c2620a" stroke-width="0.8"/><path d="M704.3 515.4 C 708.3 521, 713.8 531, 713.5 540 C 713.3 546.5, 708.3 549, 707.3 550.5 V556 H701.3 V550.5 C 700.3 549, 695.3 546.5, 695.0999999999999 540 C 694.8 531, 700.3 521, 704.3 515.4 Z" fill="#fa8419" stroke="#c2620a" stroke-width="1.15"/><rect x="701.8" y="553" width="5" height="4" fill="#fa8419"/><path d="M704.3 531 C 706.3 534, 708.5 538, 708.3 541.5 C 708.0999999999999 545, 705.8 546, 704.3 546 C 702.8 546, 700.5 545, 700.3 541.5 C 700.0999999999999 538, 702.3 534, 704.3 531 Z" fill="#f8b122" stroke="#c2620a" stroke-width="0.8"/><path d="M728.4 515.4 C 732.4 521, 737.9 531, 737.6 540 C 737.4 546.5, 732.4 549, 731.4 550.5 V556 H725.4 V550.5 C 724.4 549, 719.4 546.5, 719.1999999999999 540 C 718.9 531, 724.4 521, 728.4 515.4 Z" fill="#fa8419" stroke="#c2620a" stroke-width="1.15"/><rect x="725.9" y="553" width="5" height="4" fill="#fa8419"/><path d="M728.4 531 C 730.4 534, 732.6 538, 732.4 541.5 C 732.1999999999999 545, 729.9 546, 728.4 546 C 726.9 546, 724.6 545, 724.4 541.5 C 724.1999999999999 538, 726.4 534, 728.4 531 Z" fill="#f8b122" stroke="#c2620a" stroke-width="0.8"/><polygon points="613.8,589.5 618.4,595.9 626.3,596.1 621.6,602.5 623.8,610.0 616.4,607.6 609.9,612.0 609.9,604.1 603.7,599.3 611.2,596.9" fill="#fab421" stroke="#c8780f" stroke-width="1.1" stroke-linejoin="round"/><polygon points="657.0,583.3 658.6,587.2 662.7,588.3 659.5,591.1 659.7,595.4 656.1,593.2 652.1,594.7 653.1,590.6 650.4,587.3 654.7,586.9" fill="#fab421" stroke="#c8780f" stroke-width="1.1" stroke-linejoin="round"/><polygon points="665.8,600.6 669.4,606.1 675.9,606.7 671.8,611.8 673.3,618.1 667.2,615.8 661.5,619.2 661.9,612.6 657.0,608.4 663.3,606.7" fill="#fab421" stroke="#c8780f" stroke-width="1.1" stroke-linejoin="round"/><polygon points="701.0,575.8 705.3,585.0 715.2,587.3 707.7,594.2 708.6,604.3 699.8,599.3 690.4,603.3 692.4,593.4 685.7,585.7 695.8,584.5" fill="#fab421" stroke="#c8780f" stroke-width="1.1" stroke-linejoin="round"/></g>
<g fill="#fa8419" stroke="#c2620a" stroke-width="1"><path d="M560 465.3 H750 Q761.5 465.5 762 477 Q762.3 488 758 492.5 Q754.5 496 746 496.8 Q655 504 564 496.8 Q555.5 496 552 492.5 Q547.7 488 547.5 477 Q548 465.5 560 465.3 Z"/></g>
<circle cx="655.5" cy="455" r="34" fill="#5b1699"/><circle cx="655.5" cy="424.0" r="23.5" fill="#5b1699" stroke="#5b1699" stroke-width="0"/><circle cx="628.7" cy="439.5" r="23.5" fill="#5b1699" stroke="#5b1699" stroke-width="0"/><circle cx="628.7" cy="470.5" r="23.5" fill="#5b1699" stroke="#5b1699" stroke-width="0"/><circle cx="655.5" cy="486.0" r="23.5" fill="#5b1699" stroke="#5b1699" stroke-width="0"/><circle cx="682.3" cy="470.5" r="23.5" fill="#5b1699" stroke="#5b1699" stroke-width="0"/><circle cx="682.3" cy="439.5" r="23.5" fill="#5b1699" stroke="#5b1699" stroke-width="0"/><circle cx="655.5" cy="455" r="34" fill="#5b1699"/><circle cx="655.5" cy="455" r="22" fill="#b35bef"/><circle cx="655.5" cy="434.2" r="14.6" fill="#b35bef" stroke="#b35bef" stroke-width="0"/><circle cx="637.5" cy="444.6" r="14.6" fill="#b35bef" stroke="#b35bef" stroke-width="0"/><circle cx="637.5" cy="465.4" r="14.6" fill="#b35bef" stroke="#b35bef" stroke-width="0"/><circle cx="655.5" cy="475.8" r="14.6" fill="#b35bef" stroke="#b35bef" stroke-width="0"/><circle cx="673.5" cy="465.4" r="14.6" fill="#b35bef" stroke="#b35bef" stroke-width="0"/><circle cx="673.5" cy="444.6" r="14.6" fill="#b35bef" stroke="#b35bef" stroke-width="0"/><circle cx="655.5" cy="455" r="22" fill="#b35bef"/><circle cx="655.5" cy="455" r="14.8" fill="#f8b122" stroke="#b9780f" stroke-width="0.9"/>
<circle cx="591.3" cy="470.2" r="9.5" fill="#fbe063"/><circle cx="596.9" cy="460.4" r="9" fill="#fbe063" stroke="#b89a34" stroke-width="0.9"/><circle cx="583.7" cy="461.8" r="9" fill="#fbe063" stroke="#b89a34" stroke-width="0.9"/><circle cx="581.0" cy="474.8" r="9" fill="#fbe063" stroke="#b89a34" stroke-width="0.9"/><circle cx="592.5" cy="481.4" r="9" fill="#fbe063" stroke="#b89a34" stroke-width="0.9"/><circle cx="602.4" cy="472.5" r="9" fill="#fbe063" stroke="#b89a34" stroke-width="0.9"/><circle cx="591.3" cy="470.2" r="9.5" fill="#fbe063"/><circle cx="591.3" cy="470.2" r="4.3" fill="#fff" stroke="#b9a050" stroke-width="1"/>
<path d="M 5 -2.5 C 14.5 -8.2, 26.3 -13.2, 35.4 -12.8 C 43.1 -11.6, 45.4 -5.9, 45.4 0 C 45.4 5.9, 43.1 11.6, 35.4 12.8 C 26.3 13.2, 14.5 8.2, 5 2.5 Z" transform="translate(568.8 419.5) rotate(-106.0)" fill="#ee0024" stroke="#a80018" stroke-width="1.2"/><path d="M 5 -2.5 C 14.5 -8.2, 26.3 -13.2, 35.4 -12.8 C 43.1 -11.6, 45.4 -5.9, 45.4 0 C 45.4 5.9, 43.1 11.6, 35.4 12.8 C 26.3 13.2, 14.5 8.2, 5 2.5 Z" transform="translate(568.8 419.5) rotate(-56.0)" fill="#ee0024" stroke="#a80018" stroke-width="1.2"/><path d="M 5 -2.5 C 14.5 -8.2, 26.3 -13.2, 35.4 -12.8 C 43.1 -11.6, 45.4 -5.9, 45.4 0 C 45.4 5.9, 43.1 11.6, 35.4 12.8 C 26.3 13.2, 14.5 8.2, 5 2.5 Z" transform="translate(568.8 419.5) rotate(7.0)" fill="#ee0024" stroke="#a80018" stroke-width="1.2"/><path d="M 5 -2.5 C 14.5 -8.2, 26.3 -13.2, 35.4 -12.8 C 43.1 -11.6, 45.4 -5.9, 45.4 0 C 45.4 5.9, 43.1 11.6, 35.4 12.8 C 26.3 13.2, 14.5 8.2, 5 2.5 Z" transform="translate(568.8 419.5) rotate(69.0)" fill="#ee0024" stroke="#a80018" stroke-width="1.2"/><path d="M 5 -2.5 C 14.5 -8.2, 26.3 -13.2, 35.4 -12.8 C 43.1 -11.6, 45.4 -5.9, 45.4 0 C 45.4 5.9, 43.1 11.6, 35.4 12.8 C 26.3 13.2, 14.5 8.2, 5 2.5 Z" transform="translate(568.8 419.5) rotate(122.0)" fill="#ee0024" stroke="#a80018" stroke-width="1.2"/><path d="M 5 -2.5 C 14.5 -8.2, 26.3 -13.2, 35.4 -12.8 C 43.1 -11.6, 45.4 -5.9, 45.4 0 C 45.4 5.9, 43.1 11.6, 35.4 12.8 C 26.3 13.2, 14.5 8.2, 5 2.5 Z" transform="translate(568.8 419.5) rotate(-176.0)" fill="#ee0024" stroke="#a80018" stroke-width="1.2"/><circle cx="568.8" cy="419.5" r="12" fill="#ee0024"/><circle cx="568.8" cy="419.5" r="10.6" fill="#f8b122" stroke="#b9780f" stroke-width="0.9"/>
<circle cx="753.3" cy="429.3" r="11.5" fill="#f94fa6"/><circle cx="757.5" cy="413.6" r="11.4" fill="#f94fa6" stroke="#c02a78" stroke-width="0.9"/><circle cx="739.6" cy="420.4" r="11.4" fill="#f94fa6" stroke="#c02a78" stroke-width="0.9"/><circle cx="740.6" cy="439.6" r="11.4" fill="#f94fa6" stroke="#c02a78" stroke-width="0.9"/><circle cx="759.1" cy="444.5" r="11.4" fill="#f94fa6" stroke="#c02a78" stroke-width="0.9"/><circle cx="769.6" cy="428.4" r="11.4" fill="#f94fa6" stroke="#c02a78" stroke-width="0.9"/><circle cx="753.3" cy="429.3" r="11.5" fill="#f94fa6"/><circle cx="753" cy="429.3" r="7.6" fill="#5b1699"/>
<circle cx="729" cy="462.3" r="16.3" fill="#ee0024"/><circle cx="743.6" cy="459.7" r="6.3" fill="#ee0024" stroke="#a80018" stroke-width="0.9"/><circle cx="737.5" cy="450.2" r="6.3" fill="#ee0024" stroke="#a80018" stroke-width="0.9"/><circle cx="726.4" cy="447.7" r="6.3" fill="#ee0024" stroke="#a80018" stroke-width="0.9"/><circle cx="716.9" cy="453.8" r="6.3" fill="#ee0024" stroke="#a80018" stroke-width="0.9"/><circle cx="714.4" cy="464.9" r="6.3" fill="#ee0024" stroke="#a80018" stroke-width="0.9"/><circle cx="720.5" cy="474.4" r="6.3" fill="#ee0024" stroke="#a80018" stroke-width="0.9"/><circle cx="731.6" cy="476.9" r="6.3" fill="#ee0024" stroke="#a80018" stroke-width="0.9"/><circle cx="741.1" cy="470.8" r="6.3" fill="#ee0024" stroke="#a80018" stroke-width="0.9"/><circle cx="729" cy="462.3" r="16.3" fill="#ee0024"/><circle cx="729" cy="462.3" r="8" fill="#f94fa6"/>
<circle cx="713.4" cy="435.2" r="10" fill="#fbe063"/><circle cx="708.5" cy="424.8" r="9.2" fill="#fbe063" stroke="#b89a34" stroke-width="0.9"/><circle cx="702.0" cy="436.6" r="9.2" fill="#fbe063" stroke="#b89a34" stroke-width="0.9"/><circle cx="711.2" cy="446.5" r="9.2" fill="#fbe063" stroke="#b89a34" stroke-width="0.9"/><circle cx="723.5" cy="440.8" r="9.2" fill="#fbe063" stroke="#b89a34" stroke-width="0.9"/><circle cx="721.8" cy="427.4" r="9.2" fill="#fbe063" stroke="#b89a34" stroke-width="0.9"/><circle cx="713.4" cy="435.2" r="10" fill="#fbe063"/><circle cx="713.4" cy="435.2" r="5.6" fill="#ee0024" stroke="#a80018" stroke-width="0.8"/>
<rect x="118.1" y="181.4" width="8.4" height="8.4" fill="#fff" stroke="#8c8c8c" stroke-width="1.2"/><rect x="822.0" y="181.4" width="8.4" height="8.4" fill="#fff" stroke="#8c8c8c" stroke-width="1.2"/><rect x="118.1" y="673.5" width="8.4" height="8.4" fill="#fff" stroke="#8c8c8c" stroke-width="1.2"/><rect x="822.0" y="673.5" width="8.4" height="8.4" fill="#fff" stroke="#8c8c8c" stroke-width="1.2"/>
</svg>
<!--CANVAS-END-->

<div class="t" style="left:1278px;top:97px;font-size:11px;font-weight:bold;color:#0b8660;letter-spacing:-0.4px">Layers</div>
<div class="t" style="left:1337px;top:97px;font-size:11.5px;color:#777">Color Sync</div>
<div class="abs" style="left:1266px;top:121px;width:234px;height:1px;background:#e8e8e8"></div>
<div class="abs" style="left:1265px;top:118px;width:59px;height:3px;background:#0a7654;border-radius:1px"></div>
<svg class="abs" style="left:1279px;top:131px" width="18" height="18" viewBox="0 0 18 18"><g fill="none" stroke="#dedede" stroke-width="1.1"><path d="M1.5 5 V1.5 H5 M13 1.5 H16.5 V5 M16.5 13 V16.5 H13 M5 16.5 H1.5 V13"/><rect x="4.5" y="4.5" width="5.5" height="5.5" rx="1"/><circle cx="11" cy="11" r="3"/></g></svg>
<svg class="abs" style="left:1310px;top:131px" width="17" height="17" viewBox="0 0 17 17"><path d="M4.5 4.5 V2.8 a1.3 1.3 0 0 1 1.3 -1.3 H4 M4.5 4.5 V2.8 A1.3 1.3 0 0 1 3.2 1.5 H11 a1.3 1.3 0 0 1 1.3 1.3 V4.5" fill="none" stroke="none"/><path d="M2 11.5 V3.3 A1.3 1.3 0 0 1 3.3 2 H11.5" fill="none" stroke="#222" stroke-width="1.2"/><rect x="4.8" y="4.8" width="10.4" height="10.4" rx="1.5" fill="none" stroke="#222" stroke-width="1.2"/><path d="M10 7.3 V12.7 M7.3 10 H12.7" stroke="#222" stroke-width="1.2"/></svg>
<svg class="abs" style="left:1342px;top:131px" width="16" height="17" viewBox="0 0 16 17"><path d="M1.5 4 H14.5 M5.5 4 V2.3 a0.8 0.8 0 0 1 0.8 -0.8 H9.7 a0.8 0.8 0 0 1 0.8 0.8 V4 M3 4 L3.8 14 a1.3 1.3 0 0 0 1.3 1.2 H10.9 a1.3 1.3 0 0 0 1.3 -1.2 L13 4 M6.5 7 V12 M9.5 7 V12" fill="none" stroke="#222" stroke-width="1.2" stroke-linejoin="round"/></svg>
<div class="abs" style="left:1266px;top:159px;width:234px;height:1px;background:#e8e8e8"></div>
<div class="abs" style="left:1487px;top:160px;width:13px;height:606px;background:#f1f1f1"></div>
<div class="abs" style="left:1266px;top:160px;width:3px;height:606px;background:#f6f6f6"></div>
<svg class="abs" style="left:1490px;top:164px" width="7" height="5" viewBox="0 0 7 5"><path d="M0.5 4.5 L3.5 1 L6.5 4.5 Z" fill="#777"/></svg>
<svg class="abs" style="left:1490px;top:756px" width="7" height="5" viewBox="0 0 7 5"><path d="M0.5 0.5 L3.5 4 L6.5 0.5 Z" fill="#222"/></svg>
<svg class="abs" style="left:1277px;top:178px" width="8" height="10" viewBox="0 0 8 10"><path d="M2 1.5 L5.5 5 L2 8.5" fill="none" stroke="#333" stroke-width="1.4"/></svg>
<svg class="abs" style="left:1296px;top:174px" width="15" height="19" viewBox="0 0 15 19"><circle cx="5.3" cy="3.8" r="2.6" fill="#3f7a22"/><circle cx="9.6" cy="4" r="2.7" fill="#c01424"/><circle cx="7.5" cy="9" r="3.4" fill="#3d1650"/><circle cx="4.2" cy="8.3" r="2.2" fill="#8a1020"/><circle cx="10.8" cy="8.6" r="2.1" fill="#7a2048"/><path d="M3 11.5 H12 L11 16.5 Q7.5 18.3 4 16.5 Z" fill="#5a1a10"/><path d="M2.5 10.3 H12.5 V12.3 H2.5 Z" fill="#6a2412"/><circle cx="7.5" cy="13.8" r="1.2" fill="#a04a18"/></svg>
<div class="t" style="left:1318px;top:179px;font-size:11.8px;color:#555">svg-02-flower-pot-birth...</div>
<svg class="abs" style="left:1296px;top:218px" width="14" height="22" viewBox="0 0 14 22"><path d="M4.5 2 Q6 1.2 7 2.5 Q8.5 1.3 10 2.3 Q12 4 10.8 6.8 Q10.3 7.8 11.3 8.3 Q12.8 9.5 11.8 11.5 L10.6 17.5 Q7 20.3 3.4 17.5 L2.2 11.5 Q1.2 9.5 2.7 8.3 Q3.7 7.8 3.2 6.8 Q2 4 4.5 2 Z" fill="#fff" stroke="#b0b0b0" stroke-width="1.1"/></svg>
<div class="t" style="left:1318px;top:216px;font-size:11.6px;color:#666">Offset</div>
<div class="t" style="left:1318px;top:231.6px;font-size:11.2px;color:#999">Basic Cut</div>
<div class="abs" style="left:1297px;top:265px;width:12.5px;height:18px;background:#9a9a9a;border:1px solid #777"></div>
<div class="t" style="left:1318px;top:261.6px;font-size:11.4px;color:#666">Square</div>
<div class="t" style="left:1318px;top:276.9px;font-size:11.2px;color:#999">Basic Cut</div>
<div class="abs" style="left:1297px;top:310px;width:12.5px;height:18px;background:#4f0f8d;border:1px solid #3a0a6a"></div>
<div class="t" style="left:1318px;top:306.6px;font-size:11.4px;color:#666">Square</div>
<div class="t" style="left:1318px;top:322.4px;font-size:11.2px;color:#999">Basic Cut</div>
<div class="abs" style="left:1268px;top:344px;width:216px;height:43px;background:#b9ecdc;border-radius:3px"></div>
<svg class="abs" style="left:1277px;top:359px" width="8" height="10" viewBox="0 0 8 10"><path d="M2 1.5 L5.5 5 L2 8.5" fill="none" stroke="#333" stroke-width="1.4"/></svg>
<svg class="abs" style="left:1294.5px;top:359.5px" width="17" height="11" viewBox="0 0 17 11"><path d="M12.6 3.6 H5.6 a1.6 1.6 0 0 0 0 3.2 H12.6 a3 3 0 0 0 0 -5.6 H5.2 a4 4 0 0 0 0 8.4 H13.6" fill="none" stroke="#333" stroke-width="1.3" stroke-linecap="round"/></svg>
<div class="t" style="left:1318px;top:360px;font-size:11.2px;font-weight:bold;color:#333">Attach</div>
<div class="abs" style="left:1266px;top:766px;width:234px;height:40px;background:#f2f2f2"></div>
<div class="abs" style="left:1273px;top:771px;width:42px;height:28px;background:#fff;border:1px solid #8a8a8a;border-radius:2px"></div>
<div class="t" style="left:1323px;top:781.5px;font-size:7.8px;color:#555">Blank Canvas</div>
<svg class="abs" style="left:1284px;top:808px" width="18" height="17" viewBox="0 0 18 17"><g fill="none" stroke="#d6d6d6" stroke-width="1.1"><circle cx="7" cy="6.5" r="4.8"/><rect x="7.5" y="7" width="8" height="8" rx="1"/><path d="M9 10 l3 -1.5"/></g></svg>
<div class="t" style="left:1283px;top:830px;font-size:8.2px;color:#d2d2d2">Slice</div>
<svg class="abs" style="left:1326px;top:808px" width="18" height="17" viewBox="0 0 18 17"><g fill="none" stroke="#cfcfcf" stroke-width="1.1"><rect x="1.5" y="1.5" width="8.5" height="8.5" rx="1.5"/><circle cx="10.5" cy="10.5" r="4.8"/></g></svg>
<div class="dd" style="left:1346px;top:816px;border-top-color:#ccc"></div>
<div class="t" style="left:1321.5px;top:830px;font-size:8.2px;color:#d2d2d2">Combine</div>
<svg class="abs" style="left:1374px;top:808px" width="19" height="17" viewBox="0 0 19 17"><path d="M13.5 6 H6 a2 2 0 0 0 0 4 H13.3 a3.5 3.5 0 0 0 0 -7 H6 a3.5 3.5 0 0 0 -3.5 5 M3 10 a3.5 3.5 0 0 0 3 3.8 H12" fill="none" stroke="#222" stroke-width="1.1" stroke-linecap="round"/><path d="M2.5 2 L14.5 14.5" stroke="#fff" stroke-width="2.6"/><path d="M2.5 2 L14.5 14.5" stroke="#222" stroke-width="1.2" stroke-linecap="round"/></svg>
<div class="t" style="left:1370px;top:830px;font-size:8.2px;color:#444">Detach</div>
<svg class="abs" style="left:1419px;top:807px" width="17" height="18" viewBox="0 0 17 18"><g fill="none" stroke="#d2d2d2" stroke-width="1.1"><path d="M8.5 1.5 V8 M6 5.5 L8.5 8 L11 5.5"/><path d="M2 8.5 L8.5 12 L15 8.5 M2 12 L8.5 15.5 L15 12"/></g></svg>
<div class="t" style="left:1415px;top:830px;font-size:8.2px;color:#d2d2d2">Flatten</div>
<svg class="abs" style="left:1464px;top:808px" width="18" height="18" viewBox="0 0 18 18"><circle cx="9" cy="9" r="7.3" fill="none" stroke="#d2d2d2" stroke-width="1.2" stroke-dasharray="3.2 2.5"/></svg>
<div class="t" style="left:1458.5px;top:830px;font-size:8.2px;color:#d2d2d2">Contour</div>


<div class="abs" style="left:1249px;top:123px;width:14px;height:706px;background:#f1f1f1"></div>
<div class="abs" style="left:1250px;top:136px;width:12px;height:27px;background:#c1c1c1"></div>
<svg class="abs" style="left:1252px;top:127px" width="7" height="5" viewBox="0 0 7 5"><path d="M0.5 4.5 L3.5 1 L6.5 4.5 Z" fill="#777"/></svg>
<svg class="abs" style="left:1252px;top:820px" width="7" height="5" viewBox="0 0 7 5"><path d="M0.5 0.5 L3.5 4 L6.5 0.5 Z" fill="#222"/></svg>
<div class="abs" style="left:54px;top:829px;width:1195px;height:13px;background:#f1f1f1"></div>
<div class="abs" style="left:67px;top:830px;width:79px;height:12px;background:#d2d2d2"></div>
<div class="abs" style="left:1249px;top:829px;width:14px;height:13px;background:#dcdcdc"></div>
<svg class="abs" style="left:58px;top:832px" width="5" height="7" viewBox="0 0 5 7"><path d="M4.5 0.5 L1 3.5 L4.5 6.5 Z" fill="#222"/></svg>
<svg class="abs" style="left:1240px;top:832px" width="5" height="7" viewBox="0 0 5 7"><path d="M0.5 0.5 L4 3.5 L0.5 6.5 Z" fill="#222"/></svg>
<div class="abs" style="left:437px;top:156.4px;width:74.5px;height:16.2px;background:#161616;border-radius:2px"></div>
<div class="t" style="left:437px;width:74.5px;text-align:center;top:160.2px;font-size:9.2px;font-weight:bold;color:#fff">x:0.72 y:0.65</div>
<svg class="abs" style="left:339px;top:243px" width="26" height="34" viewBox="0 0 26 34"><path d="M3.9 3.6 V28 L9.3 23 L12.7 30.2 L16.5 28.5 L13.3 21.7 H21 Z" fill="#000" stroke="#fff" stroke-width="1.6" stroke-linejoin="round"/></svg>
<div class="abs" style="left:14px;top:799px;width:288px;height:26px;background:rgba(255,255,255,0.75);box-shadow:0 0 9px 7px rgba(255,255,255,0.75);border-radius:8px"></div>
<div class="t" id="wm" style="left:9px;top:789px;font-family:'Liberation Serif',serif;font-weight:bold;font-size:40.5px;color:#1f6a85;letter-spacing:0.1px;-webkit-text-stroke:0.7px #1f6a85;text-shadow:0 0 3px #fff,0 0 5px #fff,0 0 8px #fff,0 0 12px #fff,0 0 14px #fff">Craft with Sarah</div>
<svg class="abs" style="left:0;top:780px" width="320" height="62" viewBox="0 0 320 62"><g fill="none" stroke="#1f6a85" stroke-width="2.6" stroke-linecap="round"><path d="M78 40 C 78 47, 74 50.5, 69 49"/><path d="M187.5 40.5 C 188 46, 191 49, 195.5 47.5"/><path d="M243.5 41 C 242 46, 244 48.5, 247 47.5"/></g><g fill="#1f6a85"><circle cx="68.5" cy="47.5" r="2.3"/><circle cx="196.5" cy="46" r="2.2"/><circle cx="247.5" cy="46.5" r="2"/></g></svg>


</div>
</body>
</html>
